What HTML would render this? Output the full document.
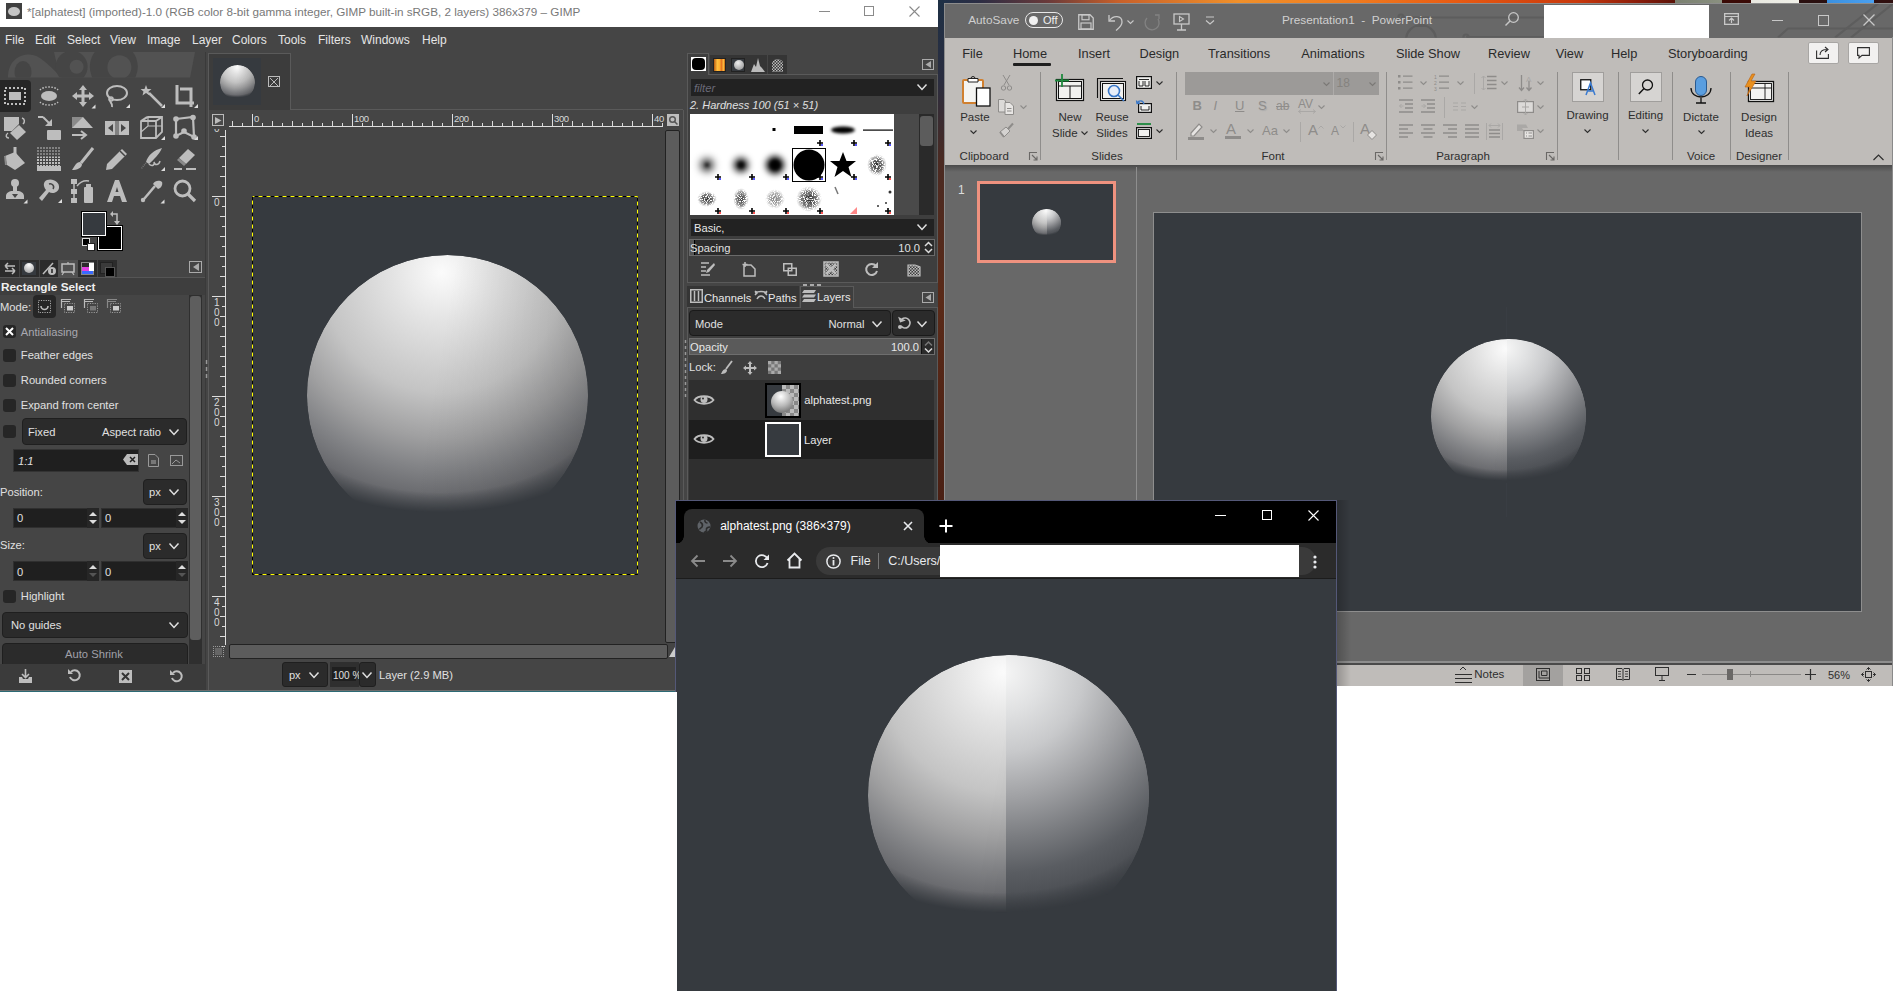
<!DOCTYPE html><html><head><meta charset="utf-8"><style>
*{box-sizing:border-box;margin:0;padding:0}
html,body{width:1893px;height:991px;overflow:hidden;background:#fff;font-family:"Liberation Sans",sans-serif;position:relative}
.a{position:absolute}
.t{position:absolute;white-space:nowrap;line-height:1}
svg{position:absolute;overflow:visible}
</style></head><body><div class="a" style="left:938px;top:0;width:955px;height:4px;background:linear-gradient(90deg,#1e3148 0px,#2b2d44 40px,#6a3a3a 110px,#c8602a 180px,#f0902a 300px,#f07a1e 420px,#e85a12 520px,#c8380c 640px,#8a1c0a 700px,#5a1208 737px,#7a8070 737px,#8a9080 784px,#3a0a06 784px,#3a0a06 813px,#e8e8e0 813px,#f0f0e8 861px,#2a1010 861px,#2a1010 889px,#3a90e0 889px,#4aa0f0 936px,#301010 936px)"></div>
<div class="a" style="left:938px;top:0;width:6px;height:686px;background:linear-gradient(180deg,#1e3045 0,#2a2d40 80px,#4a2a22 160px,#5a2a18 300px,#4a2014 500px,#3a1810 686px)"></div>
<div class="a" style="left:0px;top:0px;width:938px;height:690px;background:#454545;"></div>
<div class="a" style="left:0px;top:690px;width:938px;height:1px;background:#6c6c6c;"></div>
<div class="a" style="left:0px;top:691px;width:938px;height:1px;background:#2c6a74;"></div>
<div class="a" style="left:0px;top:0px;width:938px;height:27px;background:#fff;"></div>
<div class="a" style="left:6px;top:3px;width:16px;height:16px;background:#404040"><div class="a" style="left:2px;top:4px;width:12px;height:9px;border-radius:50%;background:#c4c4c4"></div></div>
<div class="t" style="left:27px;top:5.90px;font-size:11.7px;color:#787878;">*[alphatest] (imported)-1.0 (RGB color 8-bit gamma integer, GIMP built-in sRGB, 2 layers) 386x379 – GIMP</div>
<div class="a" style="left:819px;top:11px;width:11px;height:1px;background:#8a8a8a;"></div>
<div class="a" style="left:864px;top:6px;width:10px;height:10px;background:transparent;border:1px solid #8a8a8a"></div>
<svg style="left:909px;top:6px;" width="11" height="11" viewBox="0 0 11 11"><path d="M0.5 0.5L10.5 10.5M10.5 0.5L0.5 10.5" stroke="#8a8a8a" stroke-width="1.1"/></svg>
<div class="t" style="left:5px;top:34.14px;font-size:12px;color:#e6e6e6;">File</div>
<div class="t" style="left:35px;top:34.14px;font-size:12px;color:#e6e6e6;">Edit</div>
<div class="t" style="left:67px;top:34.14px;font-size:12px;color:#e6e6e6;">Select</div>
<div class="t" style="left:110px;top:34.14px;font-size:12px;color:#e6e6e6;">View</div>
<div class="t" style="left:147px;top:34.14px;font-size:12px;color:#e6e6e6;">Image</div>
<div class="t" style="left:192px;top:34.14px;font-size:12px;color:#e6e6e6;">Layer</div>
<div class="t" style="left:232px;top:34.14px;font-size:12px;color:#e6e6e6;">Colors</div>
<div class="t" style="left:278px;top:34.14px;font-size:12px;color:#e6e6e6;">Tools</div>
<div class="t" style="left:318px;top:34.14px;font-size:12px;color:#e6e6e6;">Filters</div>
<div class="t" style="left:361px;top:34.14px;font-size:12px;color:#e6e6e6;">Windows</div>
<div class="t" style="left:422px;top:34.14px;font-size:12px;color:#e6e6e6;">Help</div>
<svg style="left:0px;top:52px;" width="206" height="26" viewBox="0 0 206 26"><defs><clipPath id="wm"><rect x="0" y="0" width="206" height="25.5"/></clipPath></defs><g clip-path="url(#wm)"><path d="M8 26 C8 9 19 2.5 29 2.5 C39 2.5 47 11 62 26Z" fill="#525252"/><ellipse cx="23" cy="20" rx="8.5" ry="11" fill="#454545"/><path d="M54 0H195L190 26H60Z" fill="#525252"/><circle cx="71.6" cy="14.7" r="16" fill="#454545"/><circle cx="113.8" cy="14.7" r="24" fill="#454545"/><circle cx="76.6" cy="14.7" r="7" fill="#525252"/><circle cx="119.4" cy="15.2" r="12" fill="#525252"/></g></svg>
<div class="a" style="left:0px;top:80px;width:31px;height:32px;background:#262626;border-radius:0 4px 4px 0"></div>
<svg style="left:3px;top:84px;" width="24" height="24" viewBox="0 0 24 24"><rect x="2" y="4" width="20" height="16" fill="none" stroke="#bdbdbd" stroke-width="2" stroke-dasharray="2 2"/><rect x="6" y="8" width="12" height="8" fill="#bdbdbd"/></svg>
<svg style="left:37px;top:84px;" width="24" height="24" viewBox="0 0 24 24"><path d="M3 6C6 2 18 2 21 6M3 18C6 22 18 22 21 18" fill="none" stroke="#bdbdbd" stroke-width="1.5" stroke-dasharray="1.5 1.5"/><ellipse cx="12" cy="12" rx="8" ry="5" fill="#bdbdbd"/></svg>
<svg style="left:71px;top:84px;" width="24" height="24" viewBox="0 0 24 24"><path d="M12 1L16 6H13.5V10.5H18V8L23 12L18 16V13.5H13.5V18H16L12 23L8 18H10.5V13.5H6V16L1 12L6 8V10.5H10.5V6H8Z" fill="#bdbdbd"/><path d="M24.5 20.5V24.5H20.5Z" fill="#ddd"/></svg>
<svg style="left:105px;top:84px;" width="24" height="24" viewBox="0 0 24 24"><ellipse cx="12" cy="9" rx="10" ry="7" fill="none" stroke="#bdbdbd" stroke-width="2"/><path d="M5 14 C3 18 8 18 7 23" fill="none" stroke="#bdbdbd" stroke-width="2"/><circle cx="6" cy="15" r="2" fill="none" stroke="#bdbdbd" stroke-width="1.5"/></svg>
<svg style="left:140px;top:84px;" width="24" height="24" viewBox="0 0 24 24"><path d="M9 9L22 22" stroke="#bdbdbd" stroke-width="2.5"/><path d="M6 1L7.5 5L11.5 5L8.5 7.5L9.5 11.5L6 9L2.5 11.5L3.5 7.5L0.5 5L4.5 5Z" fill="#bdbdbd"/></svg>
<svg style="left:173px;top:84px;" width="24" height="24" viewBox="0 0 24 24"><path d="M4 1V19H21M7 5H18V23" fill="none" stroke="#bdbdbd" stroke-width="3"/></svg>
<svg style="left:3px;top:116px;" width="24" height="24" viewBox="0 0 24 24"><path d="M1 1H16V8L9 15H1Z" fill="#bdbdbd"/><path d="M16 9L23 16L14 24L7 17Z" fill="#bdbdbd"/><path d="M19 2 C22 3 22 6 20 8" fill="none" stroke="#bdbdbd" stroke-width="1.5"/><path d="M5 17 C2 19 3 22 6 22" fill="none" stroke="#bdbdbd" stroke-width="1.5"/></svg>
<svg style="left:37px;top:116px;" width="24" height="24" viewBox="0 0 24 24"><path d="M1 1H6M6 1L14 9" stroke="#bdbdbd" stroke-width="2"/><path d="M15 3V10H8Z" fill="#bdbdbd"/><rect x="10" y="14" width="14" height="10" rx="1" fill="#bdbdbd"/></svg>
<svg style="left:71px;top:116px;" width="24" height="24" viewBox="0 0 24 24"><path d="M1 1H12L22 12H1Z" fill="#bdbdbd"/><path d="M1 1H12L1 12Z" fill="#8a8a8a"/><path d="M1 19H14M10 15L15 19L10 23" fill="none" stroke="#bdbdbd" stroke-width="2"/></svg>
<svg style="left:105px;top:116px;" width="24" height="24" viewBox="0 0 24 24"><rect x="0" y="5" width="24" height="14" fill="#bdbdbd"/><path d="M3 12L8 8V16ZM21 12L16 8V16Z" fill="#454545"/><path d="M11 5V19M13 5V19" stroke="#454545" stroke-width="1"/></svg>
<svg style="left:140px;top:116px;" width="24" height="24" viewBox="0 0 24 24"><path d="M1 5L8 1H22V16L16 22H1Z M1 5H16V22 M16 5L22 1 M1 5L7 1" fill="none" stroke="#bdbdbd" stroke-width="1.8"/><path d="M8 1V10L1 16 M8 10H22" fill="none" stroke="#bdbdbd" stroke-width="1.2"/></svg>
<svg style="left:173px;top:116px;" width="24" height="24" viewBox="0 0 24 24"><path d="M3 3L20 1L21 21L11 16L3 20Z" fill="none" stroke="#bdbdbd" stroke-width="2.2"/><circle cx="3" cy="3" r="2.8" fill="#bdbdbd"/><circle cx="20" cy="1.5" r="2.8" fill="#bdbdbd"/><circle cx="21" cy="21" r="2.8" fill="#bdbdbd"/><circle cx="3" cy="20" r="2.8" fill="#bdbdbd"/><circle cx="11" cy="15" r="2.8" fill="#bdbdbd"/></svg>
<svg style="left:3px;top:147px;" width="24" height="24" viewBox="0 0 24 24"><path d="M2 9L12 5L22 16L12 23L4 18Z" fill="#bdbdbd"/><path d="M12 0V13" stroke="#bdbdbd" stroke-width="3"/><path d="M2 9L3 18" stroke="#8a8a8a" stroke-width="2"/></svg>
<svg style="left:37px;top:147px;" width="24" height="24" viewBox="0 0 24 24"><defs><pattern id="ht" width="3" height="3" patternUnits="userSpaceOnUse"><rect width="2" height="2" fill="#bdbdbd"/></pattern></defs><rect x="0" y="0" width="24" height="24" fill="url(#ht)" opacity="0.5"/><rect x="0" y="10" width="24" height="14" fill="url(#ht)"/><rect x="0" y="19" width="24" height="5" fill="#bdbdbd"/></svg>
<svg style="left:71px;top:147px;" width="24" height="24" viewBox="0 0 24 24"><path d="M22 1L10 16" stroke="#bdbdbd" stroke-width="3"/><path d="M9 15C5 15 4 19 1 23C6 23 11 21 11 17Z" fill="#bdbdbd"/></svg>
<svg style="left:105px;top:147px;" width="24" height="24" viewBox="0 0 24 24"><path d="M17 2L22 7L7 22L1 23L2 17Z" fill="#bdbdbd"/><path d="M15 4L20 9" stroke="#454545" stroke-width="1.5"/></svg>
<svg style="left:140px;top:147px;" width="24" height="24" viewBox="0 0 24 24"><path d="M22 1C14 3 8 8 6 15L9 17C14 12 19 8 22 1Z" fill="#bdbdbd"/><path d="M9 17 C12 20 15 18 14 15 C15 19 19 18 20 14" fill="none" stroke="#bdbdbd" stroke-width="1.5"/><path d="M6 16L1 22" stroke="#777" stroke-width="1.5" stroke-dasharray="1 1"/></svg>
<svg style="left:173px;top:147px;" width="24" height="24" viewBox="0 0 24 24"><path d="M6 11L15 2L22 8L13 17Z" fill="#bdbdbd"/><path d="M6 11L13 17L11 19L4 13Z" fill="#8a8a8a"/><path d="M1 22H9M13 22H23" stroke="#bdbdbd" stroke-width="2"/></svg>
<svg style="left:3px;top:179px;" width="24" height="24" viewBox="0 0 24 24"><circle cx="12" cy="4" r="4" fill="#bdbdbd"/><path d="M10 6H14V12C18 12 21 14 21 17V20H3V17C3 14 6 12 10 12Z" fill="#bdbdbd"/><path d="M9 15H15L12 19Z" fill="#454545"/><path d="M24.5 20.5V24.5H20.5Z" fill="#ddd"/></svg>
<svg style="left:37px;top:179px;" width="24" height="24" viewBox="0 0 24 24"><path d="M10 1C16 -1 23 3 22 9C21 14 15 15 12 13L5 22L2 19L9 11C6 7 6 3 10 1Z" fill="#bdbdbd"/><path d="M12 5 C15 4 18 7 16 10" fill="none" stroke="#454545" stroke-width="1.5"/></svg>
<svg style="left:71px;top:179px;" width="24" height="24" viewBox="0 0 24 24"><path d="M3 3V21" stroke="#bdbdbd" stroke-width="1.5"/><rect x="0" y="0" width="6" height="5" fill="#bdbdbd"/><rect x="0" y="10" width="6" height="5" fill="#bdbdbd"/><rect x="0" y="19" width="6" height="5" fill="#bdbdbd"/><path d="M6 7C9 3 13 1 18 2" fill="none" stroke="#bdbdbd" stroke-width="1.5"/><rect x="13" y="8" width="9" height="16" rx="1" fill="#bdbdbd"/><rect x="15" y="5" width="5" height="3" fill="#bdbdbd"/></svg>
<svg style="left:105px;top:179px;" width="24" height="24" viewBox="0 0 24 24"><path d="M2 23L10 1H14L22 23H17L15 17H9L7 23ZM10.5 13H13.5L12 8Z" fill="#bdbdbd"/></svg>
<svg style="left:140px;top:179px;" width="24" height="24" viewBox="0 0 24 24"><path d="M4 20L15 7" stroke="#bdbdbd" stroke-width="2.5"/><circle cx="3" cy="21" r="2.2" fill="#bdbdbd"/><path d="M13 5C15 1 20 1 22 3C23 6 21 9 18 10Z" fill="#bdbdbd"/><path d="M24.5 20.5V24.5H20.5Z" fill="#ddd"/></svg>
<svg style="left:173px;top:179px;" width="24" height="24" viewBox="0 0 24 24"><circle cx="9.5" cy="9.5" r="7.5" fill="none" stroke="#bdbdbd" stroke-width="2.8"/><path d="M15 15L22 22" stroke="#bdbdbd" stroke-width="3.2"/></svg>
<svg style="left:126px;top:104px;" width="4" height="4" viewBox="0 0 4 4"><path d="M4 0V4H0Z" fill="#ddd"/></svg>
<svg style="left:161px;top:104px;" width="4" height="4" viewBox="0 0 4 4"><path d="M4 0V4H0Z" fill="#ddd"/></svg>
<svg style="left:194px;top:104px;" width="4" height="4" viewBox="0 0 4 4"><path d="M4 0V4H0Z" fill="#ddd"/></svg>
<svg style="left:161px;top:136px;" width="4" height="4" viewBox="0 0 4 4"><path d="M4 0V4H0Z" fill="#ddd"/></svg>
<svg style="left:194px;top:136px;" width="4" height="4" viewBox="0 0 4 4"><path d="M4 0V4H0Z" fill="#ddd"/></svg>
<svg style="left:161px;top:167px;" width="4" height="4" viewBox="0 0 4 4"><path d="M4 0V4H0Z" fill="#ddd"/></svg>
<svg style="left:58px;top:199px;" width="4" height="4" viewBox="0 0 4 4"><path d="M4 0V4H0Z" fill="#ddd"/></svg>
<div class="a" style="left:98px;top:226px;width:24px;height:24px;background:#000;border:1px solid #fff;outline:1px solid #000"></div>
<div class="a" style="left:82px;top:212px;width:24px;height:24px;background:#363a3f;border:1px solid #fff;outline:1px solid #000"></div>
<svg style="left:110px;top:211px;" width="12" height="16" viewBox="0 0 12 16"><path d="M1 3H7V11" fill="none" stroke="#bdbdbd" stroke-width="1.5"/><path d="M3 0L0 3L3 6ZM4 10L7 14L10 10Z" fill="#bdbdbd"/></svg>
<div class="a" style="left:82px;top:238px;width:8px;height:8px;background:#000;border:1px solid #ddd"></div>
<div class="a" style="left:87px;top:243px;width:8px;height:8px;background:#fff;border:1px solid #222"></div>
<div class="a" style="left:0px;top:260px;width:19px;height:17px;background:#2c2c2c;"></div>
<div class="a" style="left:20px;top:260px;width:19px;height:17px;background:#2c2c2c;"></div>
<div class="a" style="left:40px;top:260px;width:19px;height:17px;background:#2c2c2c;"></div>
<div class="a" style="left:58px;top:260px;width:20px;height:17px;background:#505050;"></div>
<div class="a" style="left:78px;top:260px;width:19px;height:17px;background:#2c2c2c;"></div>
<div class="a" style="left:98px;top:260px;width:19px;height:17px;background:#2c2c2c;"></div>
<svg style="left:2px;top:262px;" width="16" height="13" viewBox="0 0 16 13"><path d="M3 4H13M3 4L6 1M3 4L6 7 M13 9H3M13 9L10 6M13 9L10 12" fill="none" stroke="#bdbdbd" stroke-width="1.5"/></svg>
<div class="a" style="left:22px;top:262px;width:14px;height:13px;background:#363a3f"><div class="a" style="left:2px;top:1px;width:10px;height:10px;border-radius:50%;background:radial-gradient(circle at 50% 20%,#fff,#999)"></div></div>
<svg style="left:42px;top:262px;" width="14" height="13" viewBox="0 0 14 13"><path d="M1 12L11 1" stroke="#bdbdbd" stroke-width="1.5"/><circle cx="10" cy="9" r="4" fill="#bdbdbd"/><path d="M10 7V11" stroke="#222" stroke-width="1.5"/></svg>
<svg style="left:61px;top:262px;" width="14" height="13" viewBox="0 0 14 13"><rect x="1" y="2" width="12" height="8" fill="none" stroke="#bdbdbd" stroke-width="1.5"/><path d="M3 10L1 13M11 10L13 13M7 0V2" stroke="#bdbdbd" stroke-width="1.2"/></svg>
<div class="a" style="left:81px;top:262px;width:13px;height:13px;background:linear-gradient(180deg,#2a2a2a 0,#2a2a2a 40%,#e040e0 40%,#e040e0 70%,#3a6aff 70%);border:1px solid #888"><div class="a" style="left:7px;top:0;width:5px;height:8px;background:#fff"></div></div>
<div class="a" style="left:100px;top:262px;width:13px;height:12px;background:#3a3a3a;border:1px solid #222"></div>
<div class="a" style="left:105px;top:267px;width:10px;height:10px;background:#000;border:1px solid #555"></div>
<div class="a" style="left:189px;top:261px;width:13px;height:12px;background:#454545;border:1px solid #aaa"></div>
<svg style="left:192px;top:263px;" width="8" height="8" viewBox="0 0 8 8"><path d="M7 0V8L1 4Z" fill="#aaa"/></svg>
<div class="a" style="left:0px;top:277px;width:206px;height:1px;background:#555;"></div>
<div class="a" style="left:0px;top:278px;width:206px;height:17px;background:#3e3e3e;"></div>
<div class="t" style="left:1px;top:282.31px;font-size:11.8px;color:#f0f0f0;font-weight:bold;">Rectangle Select</div>
<div class="a" style="left:0px;top:295px;width:189px;height:369px;background:#454545;"></div>
<div class="a" style="left:189px;top:295px;width:13px;height:369px;background:#2f2f2f;"></div>
<div class="a" style="left:190px;top:296px;width:11px;height:344px;background:#5e5e5e;border-radius:3px"></div>
<div class="t" style="left:0px;top:301.52px;font-size:11.2px;color:#e0e0e0;">Mode:</div>
<div class="a" style="left:33px;top:295px;width:23px;height:23px;background:#262626;border-radius:4px"></div>
<svg style="left:38px;top:300px;" width="13" height="13" viewBox="0 0 13 13"><rect x="0.5" y="0.5" width="12" height="12" fill="none" stroke="#aaa" stroke-width="1" stroke-dasharray="1.2 1.2"/><path d="M3 6A3.5 3.5 0 0 0 10 6" fill="none" stroke="#bbb" stroke-width="1.6"/></svg>
<svg style="left:61px;top:299px;" width="14" height="14" viewBox="0 0 14 14"><path d="M0.5 9V0.5H10" fill="none" stroke="#bbb" stroke-width="1.2"/><path d="M0.5 2.5H9" stroke="#bbb" stroke-width="1"/><rect x="3.5" y="4.5" width="10" height="9" fill="none" stroke="#999" stroke-width="1" stroke-dasharray="1.2 1.2"/><rect x="6" y="7" width="6" height="4.5" fill="#ccc"/></svg>
<svg style="left:84px;top:299px;" width="14" height="14" viewBox="0 0 14 14"><path d="M0.5 9V0.5H10" fill="none" stroke="#bbb" stroke-width="1.2"/><path d="M0.5 2.5H9" stroke="#bbb" stroke-width="1"/><rect x="3.5" y="4.5" width="10" height="9" fill="none" stroke="#999" stroke-width="1" stroke-dasharray="1.2 1.2"/><rect x="6" y="7" width="6" height="4.5" fill="#777"/></svg>
<svg style="left:107px;top:299px;" width="14" height="14" viewBox="0 0 14 14"><path d="M0.5 9V0.5H10" fill="none" stroke="#888" stroke-width="1.2"/><path d="M0.5 2.5H9" stroke="#888" stroke-width="1"/><rect x="3.5" y="4.5" width="10" height="9" fill="none" stroke="#999" stroke-width="1" stroke-dasharray="1.2 1.2"/><rect x="6" y="7" width="6" height="4.5" fill="#ccc"/></svg>
<div class="a" style="left:3px;top:325px;width:13px;height:13px;background:#262626;border-radius:3px"></div>
<svg style="left:5px;top:327px;" width="9" height="9" viewBox="0 0 9 9"><path d="M1 1L8 8M8 1L1 8" stroke="#fff" stroke-width="2"/></svg>
<div class="t" style="left:20.8px;top:327.02px;font-size:11.2px;color:#a8a8b0;">Antialiasing</div>
<div class="a" style="left:3px;top:348.5px;width:13px;height:13px;background:#262626;border-radius:3px"></div>
<div class="t" style="left:20.8px;top:350.02px;font-size:11.2px;color:#e0e0e0;">Feather edges</div>
<div class="a" style="left:3px;top:373.5px;width:13px;height:13px;background:#262626;border-radius:3px"></div>
<div class="t" style="left:20.8px;top:375.02px;font-size:11.2px;color:#e0e0e0;">Rounded corners</div>
<div class="a" style="left:3px;top:398.5px;width:13px;height:13px;background:#262626;border-radius:3px"></div>
<div class="t" style="left:20.8px;top:400.02px;font-size:11.2px;color:#e0e0e0;">Expand from center</div>
<div class="a" style="left:3px;top:425px;width:13px;height:13px;background:#262626;border-radius:3px"></div>
<div class="a" style="left:22px;top:418px;width:165px;height:27px;background:#2b2b2b;border:1px solid #1f1f1f;border-radius:4px"></div>
<div class="t" style="left:28px;top:426.52px;font-size:11.2px;color:#e0e0e0;">Fixed</div>
<div class="t" style="left:-439px;width:600px;text-align:right;top:426.52px;font-size:11.2px;color:#e0e0e0;">Aspect ratio</div>
<svg style="left:169px;top:429px;" width="10" height="6" viewBox="0 0 10 6"><path d="M0.5 0.5L5.0 5.5L9.5 0.5" fill="none" stroke="#e0e0e0" stroke-width="1.5"/></svg>
<div class="a" style="left:13px;top:448.5px;width:126px;height:23px;background:#1f1f1f;border:1px solid #333"></div>
<div class="t" style="left:18px;top:455.52px;font-size:11.2px;color:#e0e0e0;font-style:italic;">1:1</div>
<svg style="left:123px;top:454px;" width="15" height="11" viewBox="0 0 15 11"><path d="M4 0H15V11H4L0 5.5Z" fill="#bbb"/><path d="M7 3L12 8M12 3L7 8" stroke="#222" stroke-width="1.5"/></svg>
<svg style="left:148px;top:454px;" width="11" height="13" viewBox="0 0 11 13"><path d="M0.5 0.5H7L10.5 4V12.5H0.5Z" fill="none" stroke="#999"/><rect x="3" y="6" width="5" height="4" fill="#777"/></svg>
<svg style="left:170px;top:455px;" width="13" height="11" viewBox="0 0 13 11"><rect x="0.5" y="0.5" width="12" height="10" fill="none" stroke="#999"/><path d="M2 9L6 5L10 8" stroke="#999" fill="none"/></svg>
<div class="t" style="left:0px;top:486.52px;font-size:11.2px;color:#e0e0e0;">Position:</div>
<div class="a" style="left:143px;top:478.5px;width:44px;height:26px;background:#2b2b2b;border:1px solid #1f1f1f;border-radius:4px"></div>
<div class="t" style="left:149px;top:486.52px;font-size:11.2px;color:#e0e0e0;">px</div>
<svg style="left:169px;top:489px;" width="10" height="6" viewBox="0 0 10 6"><path d="M0.5 0.5L5.0 5.5L9.5 0.5" fill="none" stroke="#e0e0e0" stroke-width="1.5"/></svg>
<div class="a" style="left:13px;top:507.5px;width:86px;height:20px;background:#1f1f1f;border:1px solid #2f2f2f"></div>
<div class="t" style="left:17px;top:513.02px;font-size:11.2px;color:#e0e0e0;">0</div>
<div class="a" style="left:87px;top:507.5px;width:12px;height:20px;background:#262626;"></div>
<svg style="left:89px;top:509.5px;" width="8" height="16" viewBox="0 0 8 16"><path d="M0 6L4 2L8 6Z" fill="#ddd"/><path d="M0 10L4 14L8 10Z" fill="#ddd"/></svg>
<div class="a" style="left:101px;top:507.5px;width:87px;height:20px;background:#1f1f1f;border:1px solid #2f2f2f"></div>
<div class="t" style="left:105px;top:513.02px;font-size:11.2px;color:#e0e0e0;">0</div>
<div class="a" style="left:176px;top:507.5px;width:12px;height:20px;background:#262626;"></div>
<svg style="left:178px;top:509.5px;" width="8" height="16" viewBox="0 0 8 16"><path d="M0 6L4 2L8 6Z" fill="#ddd"/><path d="M0 10L4 14L8 10Z" fill="#ddd"/></svg>
<div class="t" style="left:0px;top:540.22px;font-size:11.2px;color:#e0e0e0;">Size:</div>
<div class="a" style="left:143px;top:532.5px;width:44px;height:26px;background:#2b2b2b;border:1px solid #1f1f1f;border-radius:4px"></div>
<div class="t" style="left:149px;top:540.52px;font-size:11.2px;color:#e0e0e0;">px</div>
<svg style="left:169px;top:543px;" width="10" height="6" viewBox="0 0 10 6"><path d="M0.5 0.5L5.0 5.5L9.5 0.5" fill="none" stroke="#e0e0e0" stroke-width="1.5"/></svg>
<div class="a" style="left:13px;top:561px;width:86px;height:20px;background:#1f1f1f;border:1px solid #2f2f2f"></div>
<div class="t" style="left:17px;top:566.52px;font-size:11.2px;color:#e0e0e0;">0</div>
<div class="a" style="left:87px;top:561px;width:12px;height:20px;background:#262626;"></div>
<svg style="left:89px;top:563px;" width="8" height="16" viewBox="0 0 8 16"><path d="M0 6L4 2L8 6Z" fill="#ddd"/><path d="M0 10L4 14L8 10Z" fill="#555"/></svg>
<div class="a" style="left:101px;top:561px;width:87px;height:20px;background:#1f1f1f;border:1px solid #2f2f2f"></div>
<div class="t" style="left:105px;top:566.52px;font-size:11.2px;color:#e0e0e0;">0</div>
<div class="a" style="left:176px;top:561px;width:12px;height:20px;background:#262626;"></div>
<svg style="left:178px;top:563px;" width="8" height="16" viewBox="0 0 8 16"><path d="M0 6L4 2L8 6Z" fill="#ddd"/><path d="M0 10L4 14L8 10Z" fill="#555"/></svg>
<div class="a" style="left:3px;top:589.5px;width:13px;height:13px;background:#262626;border-radius:3px"></div>
<div class="t" style="left:20.8px;top:591.02px;font-size:11.2px;color:#e0e0e0;">Highlight</div>
<div class="a" style="left:1.5px;top:611.5px;width:186px;height:26px;background:#2b2b2b;border:1px solid #1f1f1f;border-radius:4px"></div>
<div class="t" style="left:11px;top:620.02px;font-size:11.2px;color:#e0e0e0;">No guides</div>
<svg style="left:169px;top:622px;" width="10" height="6" viewBox="0 0 10 6"><path d="M0.5 0.5L5.0 5.5L9.5 0.5" fill="none" stroke="#e0e0e0" stroke-width="1.5"/></svg>
<div class="a" style="left:1.5px;top:642.5px;width:186px;height:25px;background:#2b2b2b;border:1px solid #1f1f1f;border-radius:4px"></div>
<div class="t" style="left:-206px;width:600px;text-align:center;top:649.02px;font-size:11.2px;color:#a0a0a8;">Auto Shrink</div>
<div class="a" style="left:0px;top:664px;width:206px;height:26px;background:#3b3b3b;"></div>
<svg style="left:19px;top:669px;" width="13" height="14" viewBox="0 0 13 14"><path d="M6.5 0V8M3 5L6.5 8.5L10 5" fill="none" stroke="#bdbdbd" stroke-width="1.6"/><path d="M0 8H3L4 10H9L10 8H13V14H0Z" fill="#bdbdbd"/></svg>
<svg style="left:68px;top:669px;" width="13" height="13" viewBox="0 0 13 13"><path d="M3 3A5 5 0 1 1 2 8" fill="none" stroke="#bdbdbd" stroke-width="2"/><path d="M0 0V5H5Z" fill="#bdbdbd"/></svg>
<svg style="left:119px;top:670px;" width="13" height="13" viewBox="0 0 13 13"><rect x="0" y="0" width="13" height="13" fill="#bdbdbd"/><path d="M3 3L10 10M10 3L3 10" stroke="#333" stroke-width="2"/></svg>
<svg style="left:170px;top:670px;" width="13" height="13" viewBox="0 0 13 13"><path d="M10 3A5 5 0 1 0 11 8" fill="none" stroke="#bdbdbd" stroke-width="2" transform="translate(13,0) scale(-1,1)"/><path d="M13 0V5H8Z" fill="#bdbdbd" transform="translate(13,0) scale(-1,1)"/></svg>
<div class="a" style="left:205px;top:52px;width:1px;height:638px;background:#3a3a3a;"></div>
<div class="a" style="left:208px;top:110px;width:1px;height:580px;background:#5a5a5a;"></div>
<svg style="left:205px;top:360px;" width="3" height="22" viewBox="0 0 3 22"><path d="M1.5 0V4M1.5 7V11M1.5 14V18" stroke="#999" stroke-width="1.5"/></svg>
<div class="a" style="left:208px;top:53px;width:83px;height:57px;background:#3c3c3c;border:1px solid #5a5a5a;border-bottom:none"></div>
<div class="a" style="left:291px;top:109px;width:392px;height:1px;background:#5a5a5a;"></div>
<div class="a" style="left:683px;top:110px;width:1px;height:580px;background:#5a5a5a;"></div>
<div class="a" style="left:213px;top:58px;width:48px;height:47px;background:#363a3f;"></div>
<div class="a" style="left:219.60px;top:64.60px;width:35.60px;height:35.60px;border-radius:50%;overflow:hidden;-webkit-mask-image:linear-gradient(#000 19.18px, rgba(0,0,0,0) 19.18px), radial-gradient(ellipse 22.80px 12.67px at 16.85px 19.18px, #000 86%, rgba(0,0,0,0.3) 100%, rgba(0,0,0,0) 106%);mask-image:linear-gradient(#000 19.18px, rgba(0,0,0,0) 19.18px), radial-gradient(ellipse 22.80px 12.67px at 16.85px 19.18px, #000 86%, rgba(0,0,0,0.3) 100%, rgba(0,0,0,0) 106%)"><div class="a" style="left:0;top:0;width:35.60px;height:35.60px;background:linear-gradient(100deg, rgba(0,0,0,0) 45%, rgba(0,0,0,0.13) 100%), radial-gradient(circle at 17.10px 2.20px, #fbfbfb 0px, #e3e3e3 6.33px, #c4c4c4 15.20px, #a0a0a1 20.90px, #838487 24.70px, #68696d 28.51px, #54565a 32.31px, #44474b 36.74px)"></div></div>
<div class="a" style="left:268px;top:75.5px;width:11.5px;height:11.5px;background:transparent;border:1px solid #bbb"></div>
<svg style="left:270px;top:77.5px;" width="8" height="8" viewBox="0 0 8 8"><path d="M0 0L8 8M8 0L0 8" stroke="#bbb" stroke-width="1"/></svg>
<div class="a" style="left:212px;top:114px;width:12px;height:12px;background:#bbb;"></div>
<div class="a" style="left:213px;top:115px;width:10px;height:10px;background:#4a4a4a;"></div>
<svg style="left:215px;top:117px;" width="7" height="7" viewBox="0 0 7 7"><path d="M0 0V7L6.5 3.5Z" fill="#bbb"/></svg>
<svg style="left:229px;top:126px;" width="434" height="1" viewBox="0 0 434 1"><path d="M0 0.5H434" stroke="#ddd" stroke-width="1"/><path d="M3.5 0V-5" stroke="#ddd" stroke-width="1"/><path d="M13.5 0V-3" stroke="#ddd" stroke-width="1"/><path d="M23.5 0V-12" stroke="#ddd" stroke-width="1"/><path d="M33.5 0V-3" stroke="#ddd" stroke-width="1"/><path d="M43.5 0V-5" stroke="#ddd" stroke-width="1"/><path d="M53.5 0V-3" stroke="#ddd" stroke-width="1"/><path d="M63.5 0V-5" stroke="#ddd" stroke-width="1"/><path d="M73.5 0V-3" stroke="#ddd" stroke-width="1"/><path d="M83.5 0V-5" stroke="#ddd" stroke-width="1"/><path d="M93.5 0V-3" stroke="#ddd" stroke-width="1"/><path d="M103.5 0V-5" stroke="#ddd" stroke-width="1"/><path d="M113.5 0V-3" stroke="#ddd" stroke-width="1"/><path d="M123.5 0V-12" stroke="#ddd" stroke-width="1"/><path d="M133.5 0V-3" stroke="#ddd" stroke-width="1"/><path d="M143.5 0V-5" stroke="#ddd" stroke-width="1"/><path d="M153.5 0V-3" stroke="#ddd" stroke-width="1"/><path d="M163.5 0V-5" stroke="#ddd" stroke-width="1"/><path d="M173.5 0V-3" stroke="#ddd" stroke-width="1"/><path d="M183.5 0V-5" stroke="#ddd" stroke-width="1"/><path d="M193.5 0V-3" stroke="#ddd" stroke-width="1"/><path d="M203.5 0V-5" stroke="#ddd" stroke-width="1"/><path d="M213.5 0V-3" stroke="#ddd" stroke-width="1"/><path d="M223.5 0V-12" stroke="#ddd" stroke-width="1"/><path d="M233.5 0V-3" stroke="#ddd" stroke-width="1"/><path d="M243.5 0V-5" stroke="#ddd" stroke-width="1"/><path d="M253.5 0V-3" stroke="#ddd" stroke-width="1"/><path d="M263.5 0V-5" stroke="#ddd" stroke-width="1"/><path d="M273.5 0V-3" stroke="#ddd" stroke-width="1"/><path d="M283.5 0V-5" stroke="#ddd" stroke-width="1"/><path d="M293.5 0V-3" stroke="#ddd" stroke-width="1"/><path d="M303.5 0V-5" stroke="#ddd" stroke-width="1"/><path d="M313.5 0V-3" stroke="#ddd" stroke-width="1"/><path d="M323.5 0V-12" stroke="#ddd" stroke-width="1"/><path d="M333.5 0V-3" stroke="#ddd" stroke-width="1"/><path d="M343.5 0V-5" stroke="#ddd" stroke-width="1"/><path d="M353.5 0V-3" stroke="#ddd" stroke-width="1"/><path d="M363.5 0V-5" stroke="#ddd" stroke-width="1"/><path d="M373.5 0V-3" stroke="#ddd" stroke-width="1"/><path d="M383.5 0V-5" stroke="#ddd" stroke-width="1"/><path d="M393.5 0V-3" stroke="#ddd" stroke-width="1"/><path d="M403.5 0V-5" stroke="#ddd" stroke-width="1"/><path d="M413.5 0V-3" stroke="#ddd" stroke-width="1"/><path d="M423.5 0V-12" stroke="#ddd" stroke-width="1"/><path d="M433.5 0V-3" stroke="#ddd" stroke-width="1"/></svg>
<div class="t" style="left:254px;top:113.96px;font-size:9.5px;color:#d8d8d8;letter-spacing:-0.4px">0</div>
<div class="t" style="left:354px;top:113.96px;font-size:9.5px;color:#d8d8d8;letter-spacing:-0.4px">100</div>
<div class="t" style="left:454px;top:113.96px;font-size:9.5px;color:#d8d8d8;letter-spacing:-0.4px">200</div>
<div class="t" style="left:554px;top:113.96px;font-size:9.5px;color:#d8d8d8;letter-spacing:-0.4px">300</div>
<div class="t" style="left:654px;top:113.96px;font-size:9.5px;color:#d8d8d8;letter-spacing:-0.4px">40</div>
<svg style="left:225px;top:130px;" width="1" height="515" viewBox="0 0 1 515"><path d="M0.5 0V515" stroke="#ddd" stroke-width="1"/><path d="M0 6.5H-5" stroke="#ddd" stroke-width="1"/><path d="M0 16.5H-3" stroke="#ddd" stroke-width="1"/><path d="M0 26.5H-5" stroke="#ddd" stroke-width="1"/><path d="M0 36.5H-3" stroke="#ddd" stroke-width="1"/><path d="M0 46.5H-5" stroke="#ddd" stroke-width="1"/><path d="M0 56.5H-3" stroke="#ddd" stroke-width="1"/><path d="M0 66.5H-13" stroke="#ddd" stroke-width="1"/><path d="M0 76.5H-3" stroke="#ddd" stroke-width="1"/><path d="M0 86.5H-5" stroke="#ddd" stroke-width="1"/><path d="M0 96.5H-3" stroke="#ddd" stroke-width="1"/><path d="M0 106.5H-5" stroke="#ddd" stroke-width="1"/><path d="M0 116.5H-3" stroke="#ddd" stroke-width="1"/><path d="M0 126.5H-5" stroke="#ddd" stroke-width="1"/><path d="M0 136.5H-3" stroke="#ddd" stroke-width="1"/><path d="M0 146.5H-5" stroke="#ddd" stroke-width="1"/><path d="M0 156.5H-3" stroke="#ddd" stroke-width="1"/><path d="M0 166.5H-13" stroke="#ddd" stroke-width="1"/><path d="M0 176.5H-3" stroke="#ddd" stroke-width="1"/><path d="M0 186.5H-5" stroke="#ddd" stroke-width="1"/><path d="M0 196.5H-3" stroke="#ddd" stroke-width="1"/><path d="M0 206.5H-5" stroke="#ddd" stroke-width="1"/><path d="M0 216.5H-3" stroke="#ddd" stroke-width="1"/><path d="M0 226.5H-5" stroke="#ddd" stroke-width="1"/><path d="M0 236.5H-3" stroke="#ddd" stroke-width="1"/><path d="M0 246.5H-5" stroke="#ddd" stroke-width="1"/><path d="M0 256.5H-3" stroke="#ddd" stroke-width="1"/><path d="M0 266.5H-13" stroke="#ddd" stroke-width="1"/><path d="M0 276.5H-3" stroke="#ddd" stroke-width="1"/><path d="M0 286.5H-5" stroke="#ddd" stroke-width="1"/><path d="M0 296.5H-3" stroke="#ddd" stroke-width="1"/><path d="M0 306.5H-5" stroke="#ddd" stroke-width="1"/><path d="M0 316.5H-3" stroke="#ddd" stroke-width="1"/><path d="M0 326.5H-5" stroke="#ddd" stroke-width="1"/><path d="M0 336.5H-3" stroke="#ddd" stroke-width="1"/><path d="M0 346.5H-5" stroke="#ddd" stroke-width="1"/><path d="M0 356.5H-3" stroke="#ddd" stroke-width="1"/><path d="M0 366.5H-13" stroke="#ddd" stroke-width="1"/><path d="M0 376.5H-3" stroke="#ddd" stroke-width="1"/><path d="M0 386.5H-5" stroke="#ddd" stroke-width="1"/><path d="M0 396.5H-3" stroke="#ddd" stroke-width="1"/><path d="M0 406.5H-5" stroke="#ddd" stroke-width="1"/><path d="M0 416.5H-3" stroke="#ddd" stroke-width="1"/><path d="M0 426.5H-5" stroke="#ddd" stroke-width="1"/><path d="M0 436.5H-3" stroke="#ddd" stroke-width="1"/><path d="M0 446.5H-5" stroke="#ddd" stroke-width="1"/><path d="M0 456.5H-3" stroke="#ddd" stroke-width="1"/><path d="M0 466.5H-13" stroke="#ddd" stroke-width="1"/><path d="M0 476.5H-3" stroke="#ddd" stroke-width="1"/><path d="M0 486.5H-5" stroke="#ddd" stroke-width="1"/><path d="M0 496.5H-3" stroke="#ddd" stroke-width="1"/><path d="M0 506.5H-5" stroke="#ddd" stroke-width="1"/><path d="M0 516.5H-3" stroke="#ddd" stroke-width="1"/></svg>
<div class="t" style="left:214px;top:197.53px;font-size:10px;color:#d8d8d8;">0</div>
<div class="t" style="left:214px;top:297.54px;font-size:10px;color:#d8d8d8;">1</div>
<div class="t" style="left:214px;top:307.54px;font-size:10px;color:#d8d8d8;">0</div>
<div class="t" style="left:214px;top:317.54px;font-size:10px;color:#d8d8d8;">0</div>
<div class="t" style="left:214px;top:397.54px;font-size:10px;color:#d8d8d8;">2</div>
<div class="t" style="left:214px;top:407.54px;font-size:10px;color:#d8d8d8;">0</div>
<div class="t" style="left:214px;top:417.54px;font-size:10px;color:#d8d8d8;">0</div>
<div class="t" style="left:214px;top:497.54px;font-size:10px;color:#d8d8d8;">3</div>
<div class="t" style="left:214px;top:507.54px;font-size:10px;color:#d8d8d8;">0</div>
<div class="t" style="left:214px;top:517.53px;font-size:10px;color:#d8d8d8;">0</div>
<div class="t" style="left:214px;top:597.53px;font-size:10px;color:#d8d8d8;">4</div>
<div class="t" style="left:214px;top:607.53px;font-size:10px;color:#d8d8d8;">0</div>
<div class="t" style="left:214px;top:617.53px;font-size:10px;color:#d8d8d8;">0</div>
<div class="a" style="left:212px;top:129px;width:12px;height:8px;overflow:hidden"><div class="t" style="left:2px;top:-5.46px;font-size:10px;color:#d8d8d8;">0</div></div>
<div class="a" style="left:253px;top:197px;width:385px;height:378px;background:#363a3f;"></div>
<div class="a" style="left:307.00px;top:254.60px;width:281.00px;height:281.00px;border-radius:50%;overflow:hidden;-webkit-mask-image:linear-gradient(#000 151.40px, rgba(0,0,0,0) 151.40px), radial-gradient(ellipse 180.00px 100.00px at 133.00px 151.40px, #000 86%, rgba(0,0,0,0.3) 100%, rgba(0,0,0,0) 106%);mask-image:linear-gradient(#000 151.40px, rgba(0,0,0,0) 151.40px), radial-gradient(ellipse 180.00px 100.00px at 133.00px 151.40px, #000 86%, rgba(0,0,0,0.3) 100%, rgba(0,0,0,0) 106%)"><div class="a" style="left:0;top:0;width:281.00px;height:281.00px;background:linear-gradient(100deg, rgba(0,0,0,0) 45%, rgba(0,0,0,0.13) 100%), radial-gradient(circle at 135.00px 17.40px, #fbfbfb 0px, #e3e3e3 50.00px, #c4c4c4 120.00px, #a0a0a1 165.00px, #838487 195.00px, #68696d 225.00px, #54565a 255.00px, #44474b 290.00px)"></div></div>
<svg style="left:252px;top:196px;" width="387" height="379" viewBox="0 0 387 379"><rect x="0.5" y="0.5" width="385" height="378" fill="none" stroke="#000" stroke-width="1"/><rect x="0.5" y="0.5" width="385" height="378" fill="none" stroke="#ffff00" stroke-width="1" stroke-dasharray="4 4" stroke-dashoffset="2"/></svg>
<div class="a" style="left:667px;top:114px;width:12px;height:12px;background:#bdbdbd;"></div>
<svg style="left:669px;top:116px;" width="9" height="9" viewBox="0 0 9 9"><circle cx="3.5" cy="3.5" r="2.8" fill="none" stroke="#555" stroke-width="1.5"/><path d="M5.5 5.5L8.5 8.5" stroke="#555" stroke-width="1.5"/></svg>
<div class="a" style="left:665px;top:130px;width:15px;height:513px;background:#5c5c5c;border:1px solid #222;border-radius:2px"></div>
<div class="a" style="left:229px;top:644px;width:439px;height:15px;background:#5c5c5c;border:1px solid #222;border-radius:2px"></div>
<svg style="left:669px;top:647px;" width="7" height="10" viewBox="0 0 7 10"><path d="M6 0V10H0Z" fill="#ccc"/></svg>
<div class="a" style="left:213px;top:646px;width:11px;height:11px;background:transparent;border:1px dotted #999"></div>
<div class="a" style="left:215px;top:648px;width:7px;height:7px;background:#666;"></div>
<div class="a" style="left:282px;top:662px;width:46px;height:25px;background:#2b2b2b;border:1px solid #1f1f1f;border-radius:3px"></div>
<div class="t" style="left:289px;top:669.69px;font-size:11px;color:#e0e0e0;">px</div>
<svg style="left:309px;top:672px;" width="10" height="6" viewBox="0 0 10 6"><path d="M0.5 0.5L5.0 5.5L9.5 0.5" fill="none" stroke="#e0e0e0" stroke-width="1.5"/></svg>
<div class="a" style="left:330px;top:662px;width:29px;height:25px;background:#2f2f2f;"></div>
<div class="a" style="left:332px;top:667px;width:24px;height:14px;background:#1f1f1f;"></div>
<div class="t" style="left:333px;top:670.53px;font-size:10px;color:#e0e0e0;">100 %</div>
<div class="a" style="left:359px;top:662px;width:17px;height:25px;background:#2b2b2b;border:1px solid #1f1f1f;border-radius:3px"></div>
<svg style="left:362px;top:672px;" width="10" height="6" viewBox="0 0 10 6"><path d="M0.5 0.5L5.0 5.5L9.5 0.5" fill="none" stroke="#e0e0e0" stroke-width="1.5"/></svg>
<div class="t" style="left:379px;top:669.52px;font-size:11.2px;color:#e0e0e0;">Layer (2.9 MB)</div>
<div class="a" style="left:684px;top:52px;width:3px;height:638px;background:#454545;"></div>
<div class="a" style="left:687px;top:74px;width:251px;height:209px;background:#3e3e3e;border:1px solid #5a5a5a"></div>
<div class="a" style="left:687px;top:53px;width:22px;height:22px;background:#3e3e3e;border:1px solid #5a5a5a;border-bottom:none"></div>
<div class="a" style="left:710px;top:55px;width:19px;height:19px;background:#353535;"></div>
<div class="a" style="left:729px;top:55px;width:19px;height:19px;background:#353535;"></div>
<div class="a" style="left:748px;top:55px;width:19px;height:19px;background:#353535;"></div>
<div class="a" style="left:768px;top:55px;width:19px;height:19px;background:#353535;"></div>
<div class="a" style="left:691px;top:57px;width:15px;height:14px;background:#fff;"></div>
<div class="a" style="left:692px;top:58px;width:13px;height:12px;background:#000;border-radius:4px"></div>
<div class="a" style="left:713px;top:58px;width:13px;height:14px;background:linear-gradient(90deg,#b85a10,#ffc040 30%,#ffb030 50%,#e07020 70%,#ffc040 85%,#c06010);border:1px solid #222"></div>
<div class="a" style="left:731px;top:58px;width:14px;height:14px;background:#363a3f;border:1px solid #222"><div class="a" style="left:2px;top:1px;width:10px;height:10px;border-radius:50%;background:radial-gradient(circle at 40% 30%,#eee,#888)"></div></div>
<svg style="left:751px;top:58px;" width="14" height="14" viewBox="0 0 14 14"><path d="M0 14L3 6L5 9L7 0L9 8L11 10L14 14Z" fill="#bbb"/></svg>
<svg style="left:770px;top:58px;" width="15" height="14" viewBox="0 0 15 14"><defs><pattern id="ck" width="3" height="3" patternUnits="userSpaceOnUse"><rect width="1.5" height="1.5" fill="#bbb"/><rect x="1.5" y="1.5" width="1.5" height="1.5" fill="#bbb"/></pattern></defs><path d="M2 4 C5 0 10 0 13 4 V14H2Z" fill="url(#ck)"/></svg>
<div class="a" style="left:922px;top:59px;width:12px;height:11px;background:#454545;border:1px solid #aaa"></div>
<svg style="left:925px;top:61px;" width="7" height="7" viewBox="0 0 7 7"><path d="M6 0V7L0.5 3.5Z" fill="#aaa"/></svg>
<div class="a" style="left:690.5px;top:78.7px;width:243px;height:17.5px;background:#222;"></div>
<div class="t" style="left:694px;top:82.52px;font-size:11.2px;color:#6a6a78;font-style:italic;">filter</div>
<svg style="left:917px;top:84px;" width="10" height="6" viewBox="0 0 10 6"><path d="M0.5 0.5L5.0 5.5L9.5 0.5" fill="none" stroke="#e0e0e0" stroke-width="1.5"/></svg>
<div class="t" style="left:690px;top:100.49px;font-size:11px;color:#e0e0e0;font-style:italic;">2. Hardness 100 (51 × 51)</div>
<div class="a" style="left:690px;top:114px;width:204px;height:101px;background:#fff;"></div>
<div class="a" style="left:894px;top:114px;width:25px;height:101px;background:#4a4a4a;"></div>
<div class="a" style="left:919px;top:114px;width:15px;height:101px;background:#2a2a2a;"></div>
<div class="a" style="left:920px;top:116px;width:13px;height:30px;background:#5c5c5c;border-radius:3px"></div>
<svg style="left:690px;top:114px;overflow:hidden" width="204" height="101" viewBox="0 0 204 101"><defs><filter id="bl" x="-50%" y="-100%" width="200%" height="300%"><feGaussianBlur stdDeviation="1.5"/></filter><filter id="b0" x="-100%" y="-100%" width="300%" height="300%"><feGaussianBlur stdDeviation="4"/></filter><filter id="b1" x="-100%" y="-100%" width="300%" height="300%"><feGaussianBlur stdDeviation="3.5"/></filter><filter id="b2" x="-100%" y="-100%" width="300%" height="300%"><feGaussianBlur stdDeviation="3"/></filter><filter id="spkf"><feTurbulence baseFrequency="0.6" numOctaves="1" seed="3"/><feColorMatrix values="0 0 0 0 0  0 0 0 0 0  0 0 0 0 0  0 0 0 -2.5 1.6"/></filter><filter id="spl0" x="-30%" y="-30%" width="160%" height="160%"><feTurbulence type="fractalNoise" baseFrequency="0.9" numOctaves="2" seed="1" result="n"/><feColorMatrix in="n" type="matrix" values="0 0 0 0 0  0 0 0 0 0  0 0 0 0 0  0 0 0 7 -2.6" result="m"/><feComposite in="SourceGraphic" in2="m" operator="in"/></filter><filter id="spl1" x="-30%" y="-30%" width="160%" height="160%"><feTurbulence type="fractalNoise" baseFrequency="0.9" numOctaves="2" seed="8" result="n"/><feColorMatrix in="n" type="matrix" values="0 0 0 0 0  0 0 0 0 0  0 0 0 0 0  0 0 0 7 -2.6" result="m"/><feComposite in="SourceGraphic" in2="m" operator="in"/></filter><filter id="spl2" x="-30%" y="-30%" width="160%" height="160%"><feTurbulence type="fractalNoise" baseFrequency="0.9" numOctaves="2" seed="15" result="n"/><feColorMatrix in="n" type="matrix" values="0 0 0 0 0  0 0 0 0 0  0 0 0 0 0  0 0 0 7 -2.6" result="m"/><feComposite in="SourceGraphic" in2="m" operator="in"/></filter><filter id="spl3" x="-30%" y="-30%" width="160%" height="160%"><feTurbulence type="fractalNoise" baseFrequency="0.9" numOctaves="2" seed="22" result="n"/><feColorMatrix in="n" type="matrix" values="0 0 0 0 0  0 0 0 0 0  0 0 0 0 0  0 0 0 7 -2.6" result="m"/><feComposite in="SourceGraphic" in2="m" operator="in"/></filter><filter id="spl4" x="-30%" y="-30%" width="160%" height="160%"><feTurbulence type="fractalNoise" baseFrequency="0.9" numOctaves="2" seed="29" result="n"/><feColorMatrix in="n" type="matrix" values="0 0 0 0 0  0 0 0 0 0  0 0 0 0 0  0 0 0 7 -2.6" result="m"/><feComposite in="SourceGraphic" in2="m" operator="in"/></filter><radialGradient id="spk"><stop offset="0" stop-color="#000" stop-opacity="0.85"/><stop offset="0.6" stop-color="#222" stop-opacity="0.6"/><stop offset="1" stop-color="#888" stop-opacity="0"/></radialGradient></defs><rect x="82.5" y="14" width="3" height="3" fill="#000"/><rect x="104" y="12" width="29" height="8" fill="#000"/><ellipse cx="153" cy="16" rx="12" ry="3.5" fill="#000" filter="url(#bl)"/><rect x="173" y="15.5" width="30" height="1.2" fill="#000"/><circle cx="17" cy="51" r="6" fill="#000" filter="url(#b0)"/><circle cx="17" cy="51" r="2" fill="#000" opacity="0.7" filter="url(#bl)"/><circle cx="51" cy="51" r="7" fill="#000" filter="url(#b1)"/><circle cx="51" cy="51" r="3" fill="#000" opacity="0.7" filter="url(#bl)"/><circle cx="85" cy="51" r="9" fill="#000" filter="url(#b2)"/><circle cx="85" cy="51" r="5" fill="#000" opacity="0.7" filter="url(#bl)"/><circle cx="119" cy="51" r="15.5" fill="#000"/><rect x="102.5" y="34.5" width="33" height="33" fill="none" stroke="#000" stroke-width="1"/><path d="M153 38L156.5 47L166 47L158.5 53L161.5 63L153 57L144.5 63L147.5 53L140 47L149.5 47Z" fill="#000"/><ellipse cx="187" cy="51" rx="10" ry="11" fill="url(#spk)" filter="url(#spl0)" opacity="1"/><ellipse cx="17" cy="85" rx="10" ry="8" fill="url(#spk)" filter="url(#spl1)" opacity="1"/><ellipse cx="51" cy="85" rx="8" ry="11" fill="url(#spk)" filter="url(#spl2)" opacity="0.9"/><ellipse cx="85" cy="85" rx="10" ry="10" fill="url(#spk)" filter="url(#spl3)" opacity="0.6"/><ellipse cx="119" cy="85" rx="13" ry="13" fill="url(#spk)" filter="url(#spl4)" opacity="1"/><path d="M145 73L148 80" stroke="#777" stroke-width="1.5"/><circle cx="200" cy="78" r="1.5" fill="#333"/><circle cx="210" cy="88" r="1.5" fill="#333"/><circle cx="206" cy="95" r="1.2" fill="#333"/><circle cx="220" cy="100" r="1.2" fill="#333"/><circle cx="188" cy="92" r="1" fill="#333"/><circle cx="196" cy="89" r="1" fill="#333"/><path d="M127 29H133M130 26V32" stroke="#000" stroke-width="1.6"/><rect x="131" y="30" width="2" height="2" fill="#55f"/><path d="M161 29H167M164 26V32" stroke="#000" stroke-width="1.6"/><rect x="165" y="30" width="2" height="2" fill="#55f"/><path d="M195 29H201M198 26V32" stroke="#000" stroke-width="1.6"/><rect x="199" y="30" width="2" height="2" fill="#55f"/><path d="M25 63H31M28 60V66" stroke="#000" stroke-width="1.6"/><rect x="29" y="64" width="2" height="2" fill="#55f"/><path d="M59 63H65M62 60V66" stroke="#000" stroke-width="1.6"/><rect x="63" y="64" width="2" height="2" fill="#55f"/><path d="M93 63H99M96 60V66" stroke="#000" stroke-width="1.6"/><rect x="97" y="64" width="2" height="2" fill="#55f"/><path d="M127 63H133M130 60V66" stroke="#000" stroke-width="1.6"/><rect x="131" y="64" width="2" height="2" fill="#55f"/><path d="M161 63H167M164 60V66" stroke="#000" stroke-width="1.6"/><rect x="165" y="64" width="2" height="2" fill="#55f"/><path d="M195 63H201M198 60V66" stroke="#000" stroke-width="1.6"/><rect x="199" y="64" width="2" height="2" fill="#f55"/><path d="M25 97H31M28 94V100" stroke="#000" stroke-width="1.6"/><rect x="29" y="98" width="2" height="2" fill="#f55"/><path d="M59 97H65M62 94V100" stroke="#000" stroke-width="1.6"/><rect x="63" y="98" width="2" height="2" fill="#f55"/><path d="M93 97H99M96 94V100" stroke="#000" stroke-width="1.6"/><rect x="97" y="98" width="2" height="2" fill="#f55"/><path d="M127 97H133M130 94V100" stroke="#000" stroke-width="1.6"/><rect x="131" y="98" width="2" height="2" fill="#f55"/><path d="M167 93V100H160Z" fill="#f88"/><path d="M195 97H201M198 94V100" stroke="#000" stroke-width="1.6"/><rect x="199" y="98" width="2" height="2" fill="#f55"/></svg>
<div class="a" style="left:690.5px;top:219px;width:243px;height:17px;background:#222;"></div>
<div class="t" style="left:694px;top:222.52px;font-size:11.2px;color:#e8e8e8;">Basic,</div>
<svg style="left:917px;top:224px;" width="10" height="6" viewBox="0 0 10 6"><path d="M0.5 0.5L5.0 5.5L9.5 0.5" fill="none" stroke="#e0e0e0" stroke-width="1.5"/></svg>
<div class="a" style="left:689px;top:239px;width:246px;height:16.5px;background:#2b2b2b;border:1px solid #6a6a6a"></div>
<div class="a" style="left:690px;top:240px;width:4px;height:14.5px;background:#555;"></div>
<div class="a" style="left:694px;top:240px;width:1px;height:14.5px;background:#000;"></div>
<div class="t" style="left:690px;top:242.52px;font-size:11.2px;color:#e0e0e0;">Spacing</div>
<div class="t" style="left:320px;width:600px;text-align:right;top:242.52px;font-size:11.2px;color:#e0e0e0;">10.0</div>
<svg style="left:924px;top:241px;" width="9" height="13" viewBox="0 0 9 13"><path d="M1 5L4.5 1.5L8 5M1 8L4.5 11.5L8 8" fill="none" stroke="#ddd" stroke-width="1.5"/></svg>
<svg style="left:701px;top:262px;" width="14" height="14" viewBox="0 0 14 14"><path d="M0 13H9M0 9H5M0 5H5M0 1H8" stroke="#bdbdbd" stroke-width="1.6"/><path d="M13 1L6 8L5 11L8 10L14 3Z" fill="#bdbdbd"/></svg>
<svg style="left:742px;top:262px;" width="14" height="14" viewBox="0 0 14 14"><path d="M2 3H9L13 7V14H2Z" fill="none" stroke="#bdbdbd" stroke-width="1.5"/><path d="M3 0V5M0.5 2.5H5.5" stroke="#bdbdbd" stroke-width="1.5"/></svg>
<svg style="left:783px;top:263px;" width="14" height="13" viewBox="0 0 14 13"><rect x="0.75" y="0.75" width="8" height="7" fill="none" stroke="#bdbdbd" stroke-width="1.5"/><rect x="5.25" y="5.25" width="8" height="7" fill="none" stroke="#bdbdbd" stroke-width="1.5"/></svg>
<svg style="left:824px;top:262px;" width="14" height="14" viewBox="0 0 14 14"><rect x="0" y="0" width="14" height="14" fill="url(#ck)"/><rect x="0" y="0" width="14" height="14" fill="none" stroke="#bdbdbd" stroke-width="1.5"/><path d="M2 2L12 12M12 2L2 12" stroke="#bdbdbd" stroke-width="2.5"/></svg>
<svg style="left:865px;top:262px;" width="14" height="14" viewBox="0 0 14 14"><path d="M11 4A5.5 5.5 0 1 0 12 9" fill="none" stroke="#bdbdbd" stroke-width="2"/><path d="M13 0V6H7Z" fill="#bdbdbd"/></svg>
<svg style="left:907px;top:262px;" width="14" height="14" viewBox="0 0 14 14"><path d="M1 3H8L13 5V14H1Z" fill="url(#ck)" stroke="#bdbdbd" stroke-width="1.2"/></svg>
<div class="a" style="left:687px;top:282px;width:251px;height:1px;background:#5a5a5a;"></div>
<svg style="left:803px;top:283px;" width="18" height="4" viewBox="0 0 18 4"><path d="M0 2H4M7 2H11M14 2H18" stroke="#aaa" stroke-width="2"/></svg>
<div class="a" style="left:687px;top:307px;width:251px;height:193px;background:#3e3e3e;border:1px solid #5a5a5a;border-bottom:none"></div>
<div class="a" style="left:687px;top:286px;width:65px;height:21px;background:#353535;"></div>
<div class="a" style="left:752px;top:286px;width:47px;height:21px;background:#353535;"></div>
<div class="a" style="left:799.5px;top:286px;width:54px;height:22px;background:#3e3e3e;border:1px solid #5a5a5a;border-bottom:none"></div>
<svg style="left:690px;top:289px;" width="13" height="14" viewBox="0 0 13 14"><rect x="0.75" y="0.75" width="11.5" height="12.5" fill="none" stroke="#bdbdbd" stroke-width="1.5"/><path d="M4.5 2V12M8.5 2V12" stroke="#bdbdbd" stroke-width="1.5"/></svg>
<div class="t" style="left:704px;top:292.52px;font-size:11.2px;color:#e8e8e8;">Channels</div>
<svg style="left:754px;top:290px;" width="14" height="11" viewBox="0 0 14 11"><path d="M1 3C4 1 10 1 13 3M1 1L3 3L1 5M13 1L11 3L13 5M3 9C5 5 9 5 11 9" fill="none" stroke="#bdbdbd" stroke-width="1.5"/></svg>
<div class="t" style="left:768px;top:292.52px;font-size:11.2px;color:#e8e8e8;">Paths</div>
<svg style="left:802px;top:289px;" width="15" height="14" viewBox="0 0 15 14"><path d="M2 1H14L12 4H0ZM2 5.5H14L12 8.5H0ZM2 10H14L12 13H0Z" fill="#bdbdbd"/></svg>
<div class="t" style="left:817px;top:291.52px;font-size:11.2px;color:#e8e8e8;">Layers</div>
<div class="a" style="left:922px;top:291.8px;width:12px;height:11px;background:#454545;border:1px solid #aaa"></div>
<svg style="left:925px;top:293.8px;" width="7" height="7" viewBox="0 0 7 7"><path d="M6 0V7L0.5 3.5Z" fill="#aaa"/></svg>
<div class="a" style="left:689.4px;top:310.3px;width:201.4px;height:26px;background:#2b2b2b;border:1px solid #1a1a1a;border-radius:4px"></div>
<div class="t" style="left:695px;top:318.52px;font-size:11.2px;color:#e0e0e0;">Mode</div>
<div class="t" style="left:264.5px;width:600px;text-align:right;top:318.52px;font-size:11.2px;color:#e0e0e0;">Normal</div>
<svg style="left:872px;top:320.5px;" width="10" height="6" viewBox="0 0 10 6"><path d="M0.5 0.5L5.0 5.5L9.5 0.5" fill="none" stroke="#e0e0e0" stroke-width="1.5"/></svg>
<div class="a" style="left:892.2px;top:310.3px;width:42.4px;height:26px;background:#2b2b2b;border:1px solid #1a1a1a;border-radius:4px"></div>
<svg style="left:897px;top:316px;" width="13" height="14" viewBox="0 0 13 14"><path d="M5 3A5 5 0 1 1 4 10" fill="none" stroke="#bdbdbd" stroke-width="1.6"/><path d="M2 0V6H8Z" fill="#bdbdbd" transform="rotate(-20 4 3)"/><circle cx="3" cy="11" r="2" fill="#bdbdbd"/></svg>
<svg style="left:917px;top:320.5px;" width="10" height="6" viewBox="0 0 10 6"><path d="M0.5 0.5L5.0 5.5L9.5 0.5" fill="none" stroke="#e0e0e0" stroke-width="1.5"/></svg>
<div class="a" style="left:689px;top:338px;width:246px;height:17px;background:#5a5a5a;border:1px solid #6e6e6e"></div>
<div class="a" style="left:922px;top:339px;width:12px;height:15px;background:#2b2b2b;"></div>
<div class="a" style="left:921px;top:339px;width:1px;height:15px;background:#111;"></div>
<div class="t" style="left:690px;top:342.02px;font-size:11.2px;color:#e8e8e8;">Opacity</div>
<div class="t" style="left:319px;width:600px;text-align:right;top:342.02px;font-size:11.2px;color:#e8e8e8;">100.0</div>
<svg style="left:924px;top:341px;" width="9" height="12" viewBox="0 0 9 12"><path d="M1 4.5L4.5 1L8 4.5" fill="none" stroke="#777" stroke-width="1.5"/><path d="M1 7.5L4.5 11L8 7.5" fill="none" stroke="#ddd" stroke-width="1.5"/></svg>
<div class="t" style="left:689px;top:362.22px;font-size:11.2px;color:#e0e0e0;">Lock:</div>
<svg style="left:721px;top:361px;" width="12" height="13" viewBox="0 0 12 13"><path d="M11 0L5 8" stroke="#bdbdbd" stroke-width="1.8"/><path d="M5 8C2 8 1 11 0 13C3 13 6 12 6 9Z" fill="#bdbdbd"/></svg>
<svg style="left:743px;top:361px;" width="14" height="14" viewBox="0 0 14 14"><path d="M7 0L9.5 3H8V6H11V4.5L14 7L11 9.5V8H8V11H9.5L7 14L4.5 11H6V8H3V9.5L0 7L3 4.5V6H6V3H4.5Z" fill="#bdbdbd"/></svg>
<svg style="left:768px;top:361px;" width="13" height="13" viewBox="0 0 13 13"><rect x="0" y="0" width="13" height="13" fill="#777"/><path d="M0 0h3.25v3.25h-3.25zM6.5 0h3.25v3.25h-3.25zM3.25 3.25h3.25v3.25h-3.25zM9.75 3.25h3.25v3.25h-3.25zM0 6.5h3.25v3.25h-3.25zM6.5 6.5h3.25v3.25h-3.25zM3.25 9.75h3.25v3.25h-3.25zM9.75 9.75h3.25v3.25h-3.25z" fill="#aaa"/></svg>
<div class="a" style="left:689.3px;top:380px;width:245px;height:120px;background:#2f2f2f;"></div>
<div class="a" style="left:689.3px;top:420px;width:245px;height:39px;background:#1e1e1e;"></div>
<svg style="left:694px;top:394.4px;" width="20" height="12" viewBox="0 0 20 12"><path d="M0.5 6C4 1 16 1 19.5 6C16 11 4 11 0.5 6Z" fill="none" stroke="#bdbdbd" stroke-width="1.8"/><circle cx="10" cy="5.5" r="3.5" fill="#bdbdbd"/><circle cx="9" cy="4.5" r="1" fill="#2f2f2f"/></svg>
<svg style="left:694px;top:433.3px;" width="20" height="12" viewBox="0 0 20 12"><path d="M0.5 6C4 1 16 1 19.5 6C16 11 4 11 0.5 6Z" fill="none" stroke="#bdbdbd" stroke-width="1.8"/><circle cx="10" cy="5.5" r="3.5" fill="#bdbdbd"/><circle cx="9" cy="4.5" r="1" fill="#2f2f2f"/></svg>
<div class="a" style="left:765px;top:383px;width:36px;height:35px;background:#000;"></div>
<div class="a" style="left:767px;top:385px;width:32px;height:31px;background:#363a3f;overflow:hidden"><div class="a" style="left:15px;top:0;width:17px;height:31px;background-image:linear-gradient(45deg,#888 25%,transparent 25%,transparent 75%,#888 75%),linear-gradient(45deg,#888 25%,transparent 25%,transparent 75%,#888 75%);background-color:#bbb;background-size:8px 8px;background-position:0 0,4px 4px"></div><div class="a" style="left:4px;top:6px;width:22px;height:22px;border-radius:50%;background:radial-gradient(circle at 45% 25%,#fff,#bbb 45%,#666 90%)"></div></div>
<div class="a" style="left:765px;top:422px;width:36px;height:35px;background:#363a3f;border:2px solid #fff"></div>
<div class="t" style="left:804.3px;top:395.02px;font-size:11.2px;color:#e8e8e8;">alphatest.png</div>
<div class="t" style="left:804px;top:434.52px;font-size:11.2px;color:#e8e8e8;">Layer</div>
<div class="a" style="left:938px;top:52px;width:0px;height:638px;background:#454545;"></div>
<svg style="left:684px;top:340px;" width="3" height="70" viewBox="0 0 3 70"><path d="M1.5 0V60" stroke="#999" stroke-width="1.5" stroke-dasharray="3 3"/></svg>
<div class="a" style="left:687px;top:500px;width:251px;height:190px;background:#454545;"></div>
<div class="a" style="left:689.3px;top:459px;width:245px;height:41px;background:#2f2f2f;"></div>
<div class="a" style="left:944px;top:3px;width:949px;height:683px;background:#686868;"></div>
<div class="a" style="left:944px;top:3px;width:1px;height:683px;background:#8c8c8c;"></div>
<div class="a" style="left:944px;top:3px;width:949px;height:1px;background:#8c8c8c;"></div>
<div class="a" style="left:945px;top:4px;width:948px;height:33.5px;background:#686868;"></div>
<svg style="left:945px;top:4px;clip-path:inset(0 0 0 0)" width="948" height="33.5" viewBox="0 0 948 33.5"><g fill="none" stroke="#5d5d5d" stroke-width="2.2"><path d="M456 13.5H600"/><circle cx="456" cy="13" r="2.5"/><circle cx="476" cy="36" r="15"/><path d="M470 22H482"/><circle cx="521" cy="33" r="2.5"/><path d="M521 33H600"/><path d="M833 33.5L843 24.5H948"/><path d="M890 33.5L935 -2M906 33.5L950 -2"/></g></svg>
<div class="t" style="left:968.2px;top:15.01px;font-size:11.8px;color:#cfcfcf;">AutoSave</div>
<div class="a" style="left:1025px;top:12px;width:38px;height:16px;background:transparent;border:1.5px solid #e8e8e8;border-radius:8px"></div>
<div class="a" style="left:1029px;top:15.5px;width:9px;height:9px;background:#f0f0f0;border-radius:50%"></div>
<div class="t" style="left:1043px;top:15.19px;font-size:11px;color:#f0f0f0;">Off</div>
<svg style="left:1078px;top:14px;" width="16" height="16" viewBox="0 0 16 16"><path d="M0.75 0.75H12L15.25 4V15.25H0.75Z" fill="none" stroke="#c8c8c8" stroke-width="1.3"/><rect x="4" y="0.75" width="7" height="5" fill="none" stroke="#c8c8c8" stroke-width="1.2"/><rect x="3" y="9" width="10" height="6" fill="none" stroke="#c8c8c8" stroke-width="1.2"/></svg>
<svg style="left:1107px;top:13px;" width="17" height="18" viewBox="0 0 17 18"><path d="M2 2V8H8" fill="none" stroke="#c8c8c8" stroke-width="1.3"/><path d="M2.5 7.5C6 2 15 2 15 9C15 13 12 15 9 17.5" fill="none" stroke="#c8c8c8" stroke-width="1.3"/></svg>
<svg style="left:1127px;top:20px;" width="7" height="4" viewBox="0 0 7 4"><path d="M0.5 0.5L3.5 3.5L6.5 0.5" fill="none" stroke="#c8c8c8" stroke-width="1.1"/></svg>
<svg style="left:1144px;top:14px;" width="17" height="17" viewBox="0 0 17 17"><path d="M3 4A7 7 0 1 0 14 5 M11 1L15 1L15 5" fill="none" stroke="#828282" stroke-width="1.3"/></svg>
<svg style="left:1173px;top:13px;" width="17" height="18" viewBox="0 0 17 18"><rect x="1" y="1" width="15" height="10" fill="none" stroke="#c8c8c8" stroke-width="1.3"/><path d="M6.5 3.5V8.5L10.5 6Z" fill="none" stroke="#c8c8c8" stroke-width="1.1"/><path d="M8.5 11V17M4 17H13" stroke="#c8c8c8" stroke-width="1.3"/></svg>
<svg style="left:1205px;top:16px;" width="10" height="9" viewBox="0 0 10 9"><path d="M1 1H9M1 4.5L5 8L9 4.5" fill="none" stroke="#c8c8c8" stroke-width="1.2"/></svg>
<div class="t" style="left:1057px;width:600px;text-align:center;top:15.01px;font-size:11.8px;color:#d0d0d0;">Presentation1 &nbsp;-&nbsp; PowerPoint</div>
<svg style="left:1505px;top:12px;" width="14" height="14" viewBox="0 0 14 14"><circle cx="8.5" cy="5.5" r="4.8" fill="none" stroke="#c8c8c8" stroke-width="1.3"/><path d="M5 9L0.5 13.5" stroke="#c8c8c8" stroke-width="1.4"/></svg>
<div class="a" style="left:1544px;top:4.7px;width:165px;height:33px;background:#fff;"></div>
<svg style="left:1724px;top:13px;" width="15" height="12" viewBox="0 0 15 12"><rect x="0.65" y="0.65" width="13.7" height="10.7" fill="none" stroke="#c8c8c8" stroke-width="1.3"/><path d="M0.65 3.5H14.35M7.5 10V5M5 7.5L7.5 5L10 7.5" fill="none" stroke="#c8c8c8" stroke-width="1.2"/></svg>
<div class="a" style="left:1772px;top:20px;width:11px;height:1.2px;background:#c8c8c8;"></div>
<div class="a" style="left:1817.5px;top:14.5px;width:11px;height:11px;background:transparent;border:1.2px solid #c8c8c8"></div>
<svg style="left:1863px;top:14px;" width="12" height="12" viewBox="0 0 12 12"><path d="M0.5 0.5L11.5 11.5M11.5 0.5L0.5 11.5" stroke="#c8c8c8" stroke-width="1.3"/></svg>
<div class="a" style="left:945px;top:37.5px;width:948px;height:127.5px;background:#bfbcb9;"></div>
<div class="t" style="left:962.2px;top:47.66px;font-size:12.8px;color:#2a2a2a;">File</div>
<div class="t" style="left:1013px;top:47.66px;font-size:12.8px;color:#2a2a2a;">Home</div>
<div class="t" style="left:1078px;top:47.66px;font-size:12.8px;color:#2a2a2a;">Insert</div>
<div class="t" style="left:1139.4px;top:47.66px;font-size:12.8px;color:#2a2a2a;">Design</div>
<div class="t" style="left:1208px;top:47.66px;font-size:12.8px;color:#2a2a2a;">Transitions</div>
<div class="t" style="left:1301.3px;top:47.66px;font-size:12.8px;color:#2a2a2a;">Animations</div>
<div class="t" style="left:1396px;top:47.66px;font-size:12.8px;color:#2a2a2a;">Slide Show</div>
<div class="t" style="left:1488px;top:47.66px;font-size:12.8px;color:#2a2a2a;">Review</div>
<div class="t" style="left:1555.7px;top:47.66px;font-size:12.8px;color:#2a2a2a;">View</div>
<div class="t" style="left:1611px;top:47.66px;font-size:12.8px;color:#2a2a2a;">Help</div>
<div class="t" style="left:1668px;top:47.66px;font-size:12.8px;color:#2a2a2a;">Storyboarding</div>
<div class="a" style="left:1013px;top:63px;width:38px;height:3px;background:#1f1f1f;border-radius:1px"></div>
<div class="a" style="left:1808px;top:41.7px;width:31.3px;height:22.3px;background:#f2f1f0;border:1px solid #a8a6a4;border-radius:2px"></div>
<svg style="left:1816px;top:46px;" width="15" height="13" viewBox="0 0 15 13"><path d="M0.6 4.5V12.4H12.4V8" fill="none" stroke="#2e2e2e" stroke-width="1.1"/><path d="M4 9C4 5 7 3.5 11 3.5M9 1L12 3.5L9 6" fill="none" stroke="#2e2e2e" stroke-width="1.1"/></svg>
<div class="a" style="left:1848.4px;top:41.7px;width:30.6px;height:22.3px;background:#f2f1f0;border:1px solid #a8a6a4;border-radius:2px"></div>
<svg style="left:1857px;top:47px;" width="13" height="12" viewBox="0 0 13 12"><path d="M0.6 0.6H12.4V8.4H5L2 11V8.4H0.6Z" fill="none" stroke="#2e2e2e" stroke-width="1.1"/></svg>
<div class="a" style="left:1040px;top:72px;width:1px;height:88px;background:#8f8d8b;"></div>
<div class="a" style="left:1176px;top:72px;width:1px;height:88px;background:#8f8d8b;"></div>
<div class="a" style="left:1386px;top:72px;width:1px;height:88px;background:#8f8d8b;"></div>
<div class="a" style="left:1557px;top:72px;width:1px;height:88px;background:#8f8d8b;"></div>
<div class="a" style="left:1618px;top:72px;width:1px;height:88px;background:#8f8d8b;"></div>
<div class="a" style="left:1672px;top:72px;width:1px;height:88px;background:#8f8d8b;"></div>
<div class="a" style="left:1730px;top:72px;width:1px;height:88px;background:#8f8d8b;"></div>
<div class="a" style="left:1788px;top:72px;width:1px;height:88px;background:#8f8d8b;"></div>
<div class="t" style="left:959.6px;top:150.77px;font-size:11.5px;color:#2e2e2e;">Clipboard</div>
<div class="t" style="left:807px;width:600px;text-align:center;top:150.77px;font-size:11.5px;color:#2e2e2e;">Slides</div>
<div class="t" style="left:973px;width:600px;text-align:center;top:150.77px;font-size:11.5px;color:#2e2e2e;">Font</div>
<div class="t" style="left:1163px;width:600px;text-align:center;top:150.77px;font-size:11.5px;color:#2e2e2e;">Paragraph</div>
<div class="t" style="left:1401px;width:600px;text-align:center;top:150.77px;font-size:11.5px;color:#2e2e2e;">Voice</div>
<div class="t" style="left:1459px;width:600px;text-align:center;top:150.77px;font-size:11.5px;color:#2e2e2e;">Designer</div>
<svg style="left:1028.8px;top:151.5px;" width="9" height="9" viewBox="0 0 9 9"><path d="M0.5 8V0.5H8M3 3L8 8M8 4.5V8H4.5" fill="none" stroke="#6a6866" stroke-width="1.1"/></svg>
<svg style="left:1374.5px;top:151.5px;" width="9" height="9" viewBox="0 0 9 9"><path d="M0.5 8V0.5H8M3 3L8 8M8 4.5V8H4.5" fill="none" stroke="#6a6866" stroke-width="1.1"/></svg>
<svg style="left:1546px;top:151.5px;" width="9" height="9" viewBox="0 0 9 9"><path d="M0.5 8V0.5H8M3 3L8 8M8 4.5V8H4.5" fill="none" stroke="#6a6866" stroke-width="1.1"/></svg>
<svg style="left:1873px;top:154px;" width="11" height="7" viewBox="0 0 11 7"><path d="M0.5 6L5.5 1L10.5 6" fill="none" stroke="#2e2e2e" stroke-width="1.2"/></svg>
<svg style="left:962px;top:76px;" width="30" height="31" viewBox="0 0 30 31"><rect x="1" y="4" width="20" height="23" rx="1" fill="#f4f4f2" stroke="#d08030" stroke-width="2"/><path d="M6 2.5H16V6H6Z" fill="#fff" stroke="#222" stroke-width="1"/><path d="M9 2.5A2 2 0 0 1 13 2.5" fill="none" stroke="#222" stroke-width="1"/><rect x="14.5" y="12" width="13.5" height="18" fill="#fff" stroke="#111" stroke-width="1.3"/></svg>
<div class="t" style="left:960.2px;top:112.07px;font-size:11.5px;color:#2e2e2e;">Paste</div>
<svg style="left:970.1px;top:130.3px;" width="7" height="4.5" viewBox="0 0 7 4.5"><path d="M0.5 0.5L3.5 3.5L6.5 0.5" fill="none" stroke="#2e2e2e" stroke-width="1.1"/></svg>
<svg style="left:1001px;top:75px;" width="11" height="17" viewBox="0 0 11 17"><path d="M2 0L8 10M9 0L3 10" stroke="#8e8c8a" stroke-width="1"/><circle cx="2.5" cy="13" r="2.2" fill="none" stroke="#8e8c8a"/><circle cx="8.5" cy="13" r="2.2" fill="none" stroke="#8e8c8a"/></svg>
<svg style="left:998px;top:99px;" width="17" height="16" viewBox="0 0 17 16"><path d="M0.5 0.5H6L7.5 2V13H0.5Z" fill="#dcdad8" stroke="#8e8c8a"/><path d="M7 3.5H12L15.5 7V15.5H7Z" fill="#e8e6e4" stroke="#8e8c8a"/><path d="M9 9.5H13.5M9 12H13.5" stroke="#8e8c8a"/></svg>
<svg style="left:1020.3px;top:105px;" width="7" height="4.5" viewBox="0 0 7 4.5"><path d="M0.5 0.5L3.5 3.5L6.5 0.5" fill="none" stroke="#8e8c8a" stroke-width="1.1"/></svg>
<svg style="left:999px;top:123px;" width="15" height="15" viewBox="0 0 15 15"><path d="M14 0.5L9 6" stroke="#8e8c8a" stroke-width="2"/><path d="M1 9L7 4L11 8L5 14Z" fill="#d4d2d0" stroke="#8e8c8a"/><path d="M1 9L5 14" stroke="#8e8c8a" stroke-width="2"/></svg>
<svg style="left:1054px;top:74px;" width="31" height="28" viewBox="0 0 31 28"><rect x="2.5" y="5.5" width="27" height="21" fill="#f2f2f0" stroke="#111" stroke-width="1.2"/><rect x="4.5" y="7.5" width="23" height="17" fill="none" stroke="#111" stroke-width="1"/><path d="M4.5 12H27.5M16 12V24.5" stroke="#111" stroke-width="1"/><path d="M8 0V13M1 6.5H15" stroke="#1e8a3e" stroke-width="1.8"/></svg>
<div class="t" style="left:770px;width:600px;text-align:center;top:112.07px;font-size:11.5px;color:#2e2e2e;">New</div>
<div class="t" style="left:1052px;top:127.77px;font-size:11.5px;color:#2e2e2e;">Slide</div>
<svg style="left:1081.0px;top:130.5px;" width="7" height="4.5" viewBox="0 0 7 4.5"><path d="M0.5 0.5L3.5 3.5L6.5 0.5" fill="none" stroke="#2e2e2e" stroke-width="1.1"/></svg>
<svg style="left:1097px;top:78px;" width="33" height="30" viewBox="0 0 33 30"><path d="M0.5 20V0.5H26" fill="none" stroke="#111" stroke-width="1.1"/><rect x="3.5" y="3.5" width="25" height="19" fill="#f2f2f0" stroke="#111" stroke-width="1.1"/><rect x="5.5" y="5.5" width="21" height="15" fill="none" stroke="#111" stroke-width="1"/><circle cx="17" cy="13" r="5.5" fill="#e8eef8" stroke="#3a78c8" stroke-width="1.6"/><path d="M21 17L27 23" stroke="#3a78c8" stroke-width="1.6"/></svg>
<div class="t" style="left:812px;width:600px;text-align:center;top:112.07px;font-size:11.5px;color:#2e2e2e;">Reuse</div>
<div class="t" style="left:812px;width:600px;text-align:center;top:127.77px;font-size:11.5px;color:#2e2e2e;">Slides</div>
<svg style="left:1136px;top:76px;" width="16" height="13" viewBox="0 0 16 13"><rect x="0.6" y="0.6" width="14.8" height="11.8" fill="#f2f2f0" stroke="#111" stroke-width="1.2"/><path d="M3 3.5H13M3 5V10H7V5M9 5V10H13V5" fill="none" stroke="#111" stroke-width="0.9"/></svg>
<svg style="left:1156.0px;top:81px;" width="7" height="4.5" viewBox="0 0 7 4.5"><path d="M0.5 0.5L3.5 3.5L6.5 0.5" fill="none" stroke="#2e2e2e" stroke-width="1.1"/></svg>
<svg style="left:1136px;top:99px;" width="16" height="14" viewBox="0 0 16 14"><rect x="2.6" y="4.6" width="12.8" height="8.8" fill="#f2f2f0" stroke="#111" stroke-width="1.2"/><path d="M5 7V11H13V7" fill="none" stroke="#111" stroke-width="0.9"/><path d="M1 4C3 1 7 1 8 5M0.5 1.5L1 4.5L4 4" fill="none" stroke="#3a78c8" stroke-width="1.3"/></svg>
<svg style="left:1136px;top:123px;" width="16" height="16" viewBox="0 0 16 16"><path d="M1 1H15" stroke="#1e8a3e" stroke-width="1.8"/><rect x="0.6" y="4.6" width="14.8" height="10.8" fill="#f2f2f0" stroke="#111" stroke-width="1.2"/><rect x="2.5" y="6.5" width="11" height="7" fill="none" stroke="#111" stroke-width="0.9"/></svg>
<svg style="left:1156.0px;top:129px;" width="7" height="4.5" viewBox="0 0 7 4.5"><path d="M0.5 0.5L3.5 3.5L6.5 0.5" fill="none" stroke="#2e2e2e" stroke-width="1.1"/></svg>
<div class="a" style="left:1185.2px;top:72.2px;width:193.8px;height:22.4px;background:#9c9a98;"></div>
<div class="a" style="left:1332.5px;top:72.2px;width:1.2px;height:22.4px;background:#aeacaa;"></div>
<svg style="left:1322.9px;top:82px;" width="7" height="4.5" viewBox="0 0 7 4.5"><path d="M0.5 0.5L3.5 3.5L6.5 0.5" fill="none" stroke="#7a7876" stroke-width="1.1"/></svg>
<svg style="left:1368.5px;top:82px;" width="7" height="4.5" viewBox="0 0 7 4.5"><path d="M0.5 0.5L3.5 3.5L6.5 0.5" fill="none" stroke="#7a7876" stroke-width="1.1"/></svg>
<div class="t" style="left:1336.5px;top:77.14px;font-size:12px;color:#85837f;">18</div>
<div class="t" style="left:1192.5px;top:99.40px;font-size:13px;color:#8e8c8a;font-weight:bold;">B</div>
<div class="t" style="left:1213.6px;top:99.40px;font-size:13px;color:#8e8c8a;font-style:italic;font-family:"Liberation Serif",serif;">I</div>
<div class="t" style="left:1235px;top:99.40px;font-size:13px;color:#8e8c8a;text-decoration:underline;">U</div>
<div class="t" style="left:1258px;top:99.40px;font-size:13px;color:#8e8c8a;text-shadow:1px 1px 1px #aaa;">S</div>
<div class="t" style="left:1276px;top:100.24px;font-size:12px;color:#8e8c8a;text-decoration:line-through;">ab</div>
<div class="t" style="left:1298px;top:97.84px;font-size:12px;color:#8e8c8a;">AV</div>
<svg style="left:1298px;top:109px;" width="18" height="5" viewBox="0 0 18 5"><path d="M0.5 2.5H17.5M3 0.5L0.5 2.5L3 4.5M15 0.5L17.5 2.5L15 4.5" fill="none" stroke="#aaa8a6" stroke-width="1"/></svg>
<svg style="left:1317.5px;top:105px;" width="7" height="4.5" viewBox="0 0 7 4.5"><path d="M0.5 0.5L3.5 3.5L6.5 0.5" fill="none" stroke="#8e8c8a" stroke-width="1.1"/></svg>
<svg style="left:1188px;top:122px;" width="16" height="18" viewBox="0 0 16 18"><path d="M3 11L11 2L14 5L6 14H3Z" fill="#e6e4e2" stroke="#8e8c8a" stroke-width="1.2"/><rect x="0" y="15" width="16" height="3" fill="#8e8c8a"/></svg>
<svg style="left:1209.5px;top:129px;" width="7" height="4.5" viewBox="0 0 7 4.5"><path d="M0.5 0.5L3.5 3.5L6.5 0.5" fill="none" stroke="#8e8c8a" stroke-width="1.1"/></svg>
<div class="t" style="left:1226px;top:121.30px;font-size:15px;color:#8e8c8a;">A</div>
<div class="a" style="left:1225px;top:136px;width:16px;height:3px;background:#8e8c8a;"></div>
<svg style="left:1246.5px;top:129px;" width="7" height="4.5" viewBox="0 0 7 4.5"><path d="M0.5 0.5L3.5 3.5L6.5 0.5" fill="none" stroke="#8e8c8a" stroke-width="1.1"/></svg>
<div class="t" style="left:1262px;top:124.00px;font-size:13px;color:#8e8c8a;">Aa</div>
<svg style="left:1282.5px;top:129px;" width="7" height="4.5" viewBox="0 0 7 4.5"><path d="M0.5 0.5L3.5 3.5L6.5 0.5" fill="none" stroke="#8e8c8a" stroke-width="1.1"/></svg>
<div class="a" style="left:1299.5px;top:122px;width:1px;height:20px;background:#aaa8a6;"></div>
<div class="t" style="left:1308px;top:122.30px;font-size:15px;color:#8e8c8a;">A</div>
<svg style="left:1318px;top:125px;" width="6" height="4" viewBox="0 0 6 4"><path d="M0.5 3.5L3 1L5.5 3.5" fill="none" stroke="#aaa8a6"/></svg>
<div class="t" style="left:1331px;top:124.84px;font-size:12px;color:#8e8c8a;">A</div>
<svg style="left:1340px;top:125px;" width="6" height="4" viewBox="0 0 6 4"><path d="M0.5 0.5L3 3L5.5 0.5" fill="none" stroke="#aaa8a6"/></svg>
<div class="a" style="left:1352.5px;top:122px;width:1px;height:20px;background:#aaa8a6;"></div>
<div class="t" style="left:1360px;top:121.30px;font-size:15px;color:#8e8c8a;">A</div>
<svg style="left:1367px;top:130px;" width="10" height="10" viewBox="0 0 10 10"><path d="M5 0.5L9.5 5L5 9.5L0.5 5Z" fill="#e6e4e2" stroke="#8e8c8a"/></svg>
<svg style="left:1398px;top:75px;" width="16" height="16" viewBox="0 0 16 16"><rect x="0" y="0" width="2.5" height="2.5" fill="#8e8c8a"/><rect x="0" y="6" width="2.5" height="2.5" fill="#8e8c8a"/><rect x="0" y="12" width="2.5" height="2.5" fill="#8e8c8a"/><path d="M5 1.2H14.5M5 7.2H14.5M5 13.2H14.5" stroke="#8e8c8a" stroke-width="1.3"/></svg>
<svg style="left:1419.5px;top:81px;" width="7" height="4.5" viewBox="0 0 7 4.5"><path d="M0.5 0.5L3.5 3.5L6.5 0.5" fill="none" stroke="#8e8c8a" stroke-width="1.1"/></svg>
<svg style="left:1434px;top:75px;" width="16" height="16" viewBox="0 0 16 16"><text x="0" y="4" font-size="5" fill="#8e8c8a" font-family="Liberation Sans">1</text><text x="0" y="10" font-size="5" fill="#8e8c8a" font-family="Liberation Sans">2</text><text x="0" y="16" font-size="5" fill="#8e8c8a" font-family="Liberation Sans">3</text><path d="M5 1.2H15M5 7.2H15M5 13.2H15" stroke="#8e8c8a" stroke-width="1.3"/></svg>
<svg style="left:1457.0px;top:81px;" width="7" height="4.5" viewBox="0 0 7 4.5"><path d="M0.5 0.5L3.5 3.5L6.5 0.5" fill="none" stroke="#8e8c8a" stroke-width="1.1"/></svg>
<div class="a" style="left:1473.5px;top:73px;width:1px;height:21px;background:#aaa8a6;"></div>
<svg style="left:1481px;top:75px;" width="16" height="16" viewBox="0 0 16 16"><path d="M2.5 1V15M0.5 3L2.5 1L4.5 3M0.5 13L2.5 15L4.5 13" fill="none" stroke="#aaa8a6" stroke-width="1"/><path d="M6 1.5H15.5M6 5.5H15.5M6 9.5H15.5M6 13.5H15.5" stroke="#8e8c8a" stroke-width="1.3"/></svg>
<svg style="left:1501.0px;top:81px;" width="7" height="4.5" viewBox="0 0 7 4.5"><path d="M0.5 0.5L3.5 3.5L6.5 0.5" fill="none" stroke="#8e8c8a" stroke-width="1.1"/></svg>
<svg style="left:1519px;top:75px;" width="14" height="17" viewBox="0 0 14 17"><path d="M2.5 0V15M0 12.5L2.5 15.5L5 12.5M10 6V15.5M7.5 12.5L10 15.5L12.5 12.5" fill="none" stroke="#8e8c8a" stroke-width="1.3"/><text x="7" y="7" font-size="8" fill="#aaa8a6" font-family="Liberation Sans">A</text></svg>
<svg style="left:1537.0px;top:81px;" width="7" height="4.5" viewBox="0 0 7 4.5"><path d="M0.5 0.5L3.5 3.5L6.5 0.5" fill="none" stroke="#8e8c8a" stroke-width="1.1"/></svg>
<svg style="left:1399px;top:99px;" width="15" height="14" viewBox="0 0 15 14"><path d="M0 1H14M6 5H14M6 9H14M0 13H14" stroke="#8e8c8a" stroke-width="1.3"/><path d="M4.5 7H0.5M2.5 5L0.5 7L2.5 9" fill="none" stroke="#aaa8a6" stroke-width="1"/></svg>
<svg style="left:1421px;top:99px;" width="15" height="14" viewBox="0 0 15 14"><path d="M0 1H14M6 5H14M6 9H14M0 13H14" stroke="#8e8c8a" stroke-width="1.3"/><path d="M0.5 7H4.5M2.5 5L4.5 7L2.5 9" fill="none" stroke="#aaa8a6" stroke-width="1"/></svg>
<div class="a" style="left:1443.5px;top:97px;width:1px;height:21px;background:#aaa8a6;"></div>
<svg style="left:1453px;top:102px;" width="13" height="9" viewBox="0 0 13 9"><path d="M0 1H5M0 4.5H5M0 8H5M8 1H13M8 4.5H13M8 8H13" stroke="#aaa8a6" stroke-width="1.2"/></svg>
<svg style="left:1471.0px;top:105px;" width="7" height="4.5" viewBox="0 0 7 4.5"><path d="M0.5 0.5L3.5 3.5L6.5 0.5" fill="none" stroke="#8e8c8a" stroke-width="1.1"/></svg>
<svg style="left:1517px;top:99px;" width="17" height="16" viewBox="0 0 17 16"><rect x="0.6" y="2.6" width="15.8" height="10.8" fill="#dcdad8" stroke="#8e8c8a" stroke-width="1.2"/><path d="M8.5 0V16M6.5 2L8.5 0L10.5 2M6.5 14L8.5 16L10.5 14M5 8H12" fill="none" stroke="#aaa8a6" stroke-width="1"/></svg>
<svg style="left:1537.0px;top:105px;" width="7" height="4.5" viewBox="0 0 7 4.5"><path d="M0.5 0.5L3.5 3.5L6.5 0.5" fill="none" stroke="#8e8c8a" stroke-width="1.1"/></svg>
<svg style="left:1399px;top:124px;" width="15" height="14" viewBox="0 0 15 14"><path d="M0 1H14M0 5H9M0 9H14M0 13H9" stroke="#8e8c8a" stroke-width="1.3"/></svg>
<svg style="left:1421px;top:124px;" width="15" height="14" viewBox="0 0 15 14"><path d="M0 1H14M2.5 5H11.5M0 9H14M2.5 13H11.5" stroke="#8e8c8a" stroke-width="1.3"/></svg>
<svg style="left:1443px;top:124px;" width="15" height="14" viewBox="0 0 15 14"><path d="M0 1H14M5 5H14M0 9H14M5 13H14" stroke="#8e8c8a" stroke-width="1.3"/></svg>
<svg style="left:1465px;top:124px;" width="15" height="14" viewBox="0 0 15 14"><path d="M0 1H14M0 5H14M0 9H14M0 13H14" stroke="#8e8c8a" stroke-width="1.3"/></svg>
<svg style="left:1486px;top:123px;" width="17" height="17" viewBox="0 0 17 17"><path d="M0.5 0V17M16.5 0V17" stroke="#aaa8a6" stroke-width="1"/><path d="M3 2.5H14M5 0.5L3 2.5L5 4.5M12 0.5L14 2.5L12 4.5" fill="none" stroke="#aaa8a6" stroke-width="1"/><path d="M3 7H14M3 10.5H14M3 14H14" stroke="#8e8c8a" stroke-width="1.3"/></svg>
<svg style="left:1517px;top:124px;" width="17" height="15" viewBox="0 0 17 15"><path d="M0 0.5H9L11 4H5L7 7H0Z" fill="#aaa8a6"/><rect x="7" y="6.6" width="9.4" height="7.8" fill="#e6e4e2" stroke="#8e8c8a" stroke-width="1.2"/><path d="M9 9H10M11.5 9H15M9 12H10M11.5 12H15" stroke="#8e8c8a" stroke-width="1"/></svg>
<svg style="left:1537.0px;top:129px;" width="7" height="4.5" viewBox="0 0 7 4.5"><path d="M0.5 0.5L3.5 3.5L6.5 0.5" fill="none" stroke="#8e8c8a" stroke-width="1.1"/></svg>
<div class="a" style="left:1572px;top:72.2px;width:32px;height:30.3px;background:#d6d4d2;border:1px solid #a09e9c"></div>
<svg style="left:1580px;top:79px;" width="17" height="17" viewBox="0 0 17 17"><rect x="0.75" y="0.75" width="10" height="10" fill="#fff" stroke="#111" stroke-width="1.3"/><path d="M6 16L10.5 4L15 16M7.5 12H13.5" fill="none" stroke="#3b7bd0" stroke-width="1.5"/></svg>
<div class="t" style="left:1287.5px;width:600px;text-align:center;top:110.27px;font-size:11.5px;color:#2e2e2e;">Drawing</div>
<svg style="left:1584.0px;top:128.5px;" width="7" height="4.5" viewBox="0 0 7 4.5"><path d="M0.5 0.5L3.5 3.5L6.5 0.5" fill="none" stroke="#2e2e2e" stroke-width="1.1"/></svg>
<div class="a" style="left:1630px;top:72.2px;width:32px;height:30.3px;background:#d6d4d2;border:1px solid #a09e9c"></div>
<svg style="left:1638px;top:79px;" width="16" height="16" viewBox="0 0 16 16"><circle cx="9.5" cy="6" r="5" fill="none" stroke="#111" stroke-width="1.3"/><path d="M6 9.5L0.8 15" stroke="#111" stroke-width="1.4"/></svg>
<div class="t" style="left:1345.5px;width:600px;text-align:center;top:110.27px;font-size:11.5px;color:#2e2e2e;">Editing</div>
<svg style="left:1642.0px;top:128.5px;" width="7" height="4.5" viewBox="0 0 7 4.5"><path d="M0.5 0.5L3.5 3.5L6.5 0.5" fill="none" stroke="#2e2e2e" stroke-width="1.1"/></svg>
<svg style="left:1690px;top:76px;" width="22" height="28" viewBox="0 0 22 28"><rect x="5.5" y="0.5" width="11" height="19" rx="5.5" fill="#5a9ee0" stroke="#2a5a90" stroke-width="1"/><path d="M1 12C1 24 21 24 21 12" fill="none" stroke="#111" stroke-width="1.3"/><path d="M11 22V27M6 27H16" stroke="#111" stroke-width="1.3"/></svg>
<div class="t" style="left:1401px;width:600px;text-align:center;top:112.27px;font-size:11.5px;color:#2e2e2e;">Dictate</div>
<svg style="left:1697.5px;top:130px;" width="7" height="4.5" viewBox="0 0 7 4.5"><path d="M0.5 0.5L3.5 3.5L6.5 0.5" fill="none" stroke="#2e2e2e" stroke-width="1.1"/></svg>
<svg style="left:1744px;top:74px;" width="31" height="29" viewBox="0 0 31 29"><rect x="4.5" y="7.5" width="25" height="20" fill="#f4f4f2" stroke="#111" stroke-width="1.3"/><rect x="6.5" y="9.5" width="21" height="16" fill="none" stroke="#111" stroke-width="0.9"/><path d="M21 9.5V25.5M6.5 14H27.5" stroke="#111" stroke-width="0.9"/><path d="M8 0L1 13H6L3 22L12 7H7L11 0Z" fill="#e8901e" stroke="#b86010" stroke-width="0.6"/></svg>
<div class="t" style="left:1459px;width:600px;text-align:center;top:112.27px;font-size:11.5px;color:#2e2e2e;">Design</div>
<div class="t" style="left:1459px;width:600px;text-align:center;top:128.27px;font-size:11.5px;color:#2e2e2e;">Ideas</div>
<div class="a" style="left:945px;top:165px;width:948px;height:498px;background:#686868;"></div>
<div class="a" style="left:945px;top:165px;width:948px;height:7px;background:linear-gradient(#4a4a4a,#686868);"></div>
<div class="a" style="left:1136px;top:167px;width:1px;height:496px;background:#8e8e8e;"></div>
<div class="t" style="left:957.9px;top:183.94px;font-size:12px;color:#dddddd;">1</div>
<div class="a" style="left:976.8px;top:180.8px;width:139.4px;height:82.3px;background:#363a3f;border:3px solid #ef927f"></div>
<div class="a" style="left:1032.30px;top:208.60px;width:28.90px;height:28.90px;border-radius:50%;overflow:hidden;-webkit-mask-image:linear-gradient(#000 15.57px, rgba(0,0,0,0) 15.57px), radial-gradient(ellipse 18.51px 10.28px at 13.68px 15.57px, #000 86%, rgba(0,0,0,0.3) 100%, rgba(0,0,0,0) 106%);mask-image:linear-gradient(#000 15.57px, rgba(0,0,0,0) 15.57px), radial-gradient(ellipse 18.51px 10.28px at 13.68px 15.57px, #000 86%, rgba(0,0,0,0.3) 100%, rgba(0,0,0,0) 106%)"><div class="a" style="left:0;top:0;width:28.90px;height:28.90px;background:linear-gradient(100deg, rgba(0,0,0,0) 45%, rgba(0,0,0,0.13) 100%), radial-gradient(circle at 13.88px 1.79px, #fbfbfb 0px, #e3e3e3 5.14px, #c4c4c4 12.34px, #a0a0a1 16.97px, #838487 20.06px, #68696d 23.14px, #54565a 26.23px, #44474b 29.83px)"></div><div class="a" style="left:14.21px;top:0;width:14.69px;height:28.90px;background:radial-gradient(circle at -0.33px 1.79px, #f6f6f6 0px, #e0e1e2 4.11px, #c8c9cb 8.23px, #a0a1a4 12.86px, #7a7c80 16.97px, #5a5d62 20.57px, #45484d 24.68px, #3a3d42 28.80px)"></div></div>
<div class="a" style="left:1153px;top:212px;width:709px;height:400px;background:#363a3f;border:1px solid #8e8e8e"></div>
<div class="a" style="left:1431.40px;top:339.00px;width:154.80px;height:154.80px;border-radius:50%;overflow:hidden;-webkit-mask-image:linear-gradient(#000 83.40px, rgba(0,0,0,0) 83.40px), radial-gradient(ellipse 99.16px 55.09px at 73.27px 83.40px, #000 86%, rgba(0,0,0,0.3) 100%, rgba(0,0,0,0) 106%);mask-image:linear-gradient(#000 83.40px, rgba(0,0,0,0) 83.40px), radial-gradient(ellipse 99.16px 55.09px at 73.27px 83.40px, #000 86%, rgba(0,0,0,0.3) 100%, rgba(0,0,0,0) 106%)"><div class="a" style="left:0;top:0;width:154.80px;height:154.80px;background:linear-gradient(100deg, rgba(0,0,0,0) 45%, rgba(0,0,0,0.13) 100%), radial-gradient(circle at 74.37px 9.59px, #fbfbfb 0px, #e3e3e3 27.54px, #c4c4c4 66.11px, #a0a0a1 90.90px, #838487 107.42px, #68696d 123.95px, #54565a 140.48px, #44474b 159.76px)"></div><div class="a" style="left:75.75px;top:0;width:79.05px;height:154.80px;background:radial-gradient(circle at -1.38px 9.59px, #f6f6f6 0px, #e0e1e2 22.04px, #c8c9cb 44.07px, #a0a1a4 68.86px, #7a7c80 90.90px, #5a5d62 110.18px, #45484d 132.21px, #3a3d42 154.25px)"></div></div>
<div class="a" style="left:1506px;top:307px;width:1px;height:30px;background:#393d43;"></div>
<div class="a" style="left:1506px;top:483px;width:1px;height:34px;background:#393d43;"></div>
<div class="a" style="left:945px;top:661px;width:948px;height:2px;background:#8e8e8e;"></div>
<div class="a" style="left:945px;top:663px;width:948px;height:2px;background:#4a4a4a;"></div>
<div class="a" style="left:945px;top:665px;width:948px;height:21px;background:#bfbcb9;"></div>
<svg style="left:1455px;top:666px;" width="22" height="19" viewBox="0 0 22 19"><path d="M5 4L8 1L11 4" fill="none" stroke="#2e2e2e" stroke-width="1"/><path d="M0 8.5H17M0 12.5H17M0 16.5H17" stroke="#2e2e2e" stroke-width="1"/></svg>
<div class="t" style="left:1474.3px;top:669.07px;font-size:11.5px;color:#2e2e2e;">Notes</div>
<div class="a" style="left:1523.3px;top:665px;width:39.3px;height:21px;background:#a3a19f;"></div>
<svg style="left:1536px;top:668px;" width="14" height="13" viewBox="0 0 14 13"><rect x="0.5" y="0.5" width="13" height="12" fill="none" stroke="#2e2e2e" stroke-width="1"/><path d="M3 3V10H13M5.5 3H11V7.5H5.5Z" fill="none" stroke="#2e2e2e" stroke-width="1"/></svg>
<svg style="left:1576px;top:668px;" width="14" height="13" viewBox="0 0 14 13"><rect x="0.5" y="0.5" width="5" height="5" fill="none" stroke="#2e2e2e"/><rect x="8.5" y="0.5" width="5" height="5" fill="none" stroke="#2e2e2e"/><rect x="0.5" y="7.5" width="5" height="5" fill="none" stroke="#2e2e2e"/><rect x="8.5" y="7.5" width="5" height="5" fill="none" stroke="#2e2e2e"/></svg>
<svg style="left:1616px;top:667px;" width="14" height="14" viewBox="0 0 14 14"><path d="M0.5 1.5H6L7 2.5L8 1.5H13.5V12.5H8L7 13.5L6 12.5H0.5Z M7 2.5V13" fill="none" stroke="#2e2e2e" stroke-width="1"/><path d="M2 4.5H5M2 7H5M2 9.5H5M9 4.5H12M9 7H12M9 9.5H12" stroke="#2e2e2e" stroke-width="0.8"/></svg>
<svg style="left:1655px;top:667px;" width="14" height="14" viewBox="0 0 14 14"><rect x="0.5" y="0.5" width="13" height="8" fill="none" stroke="#2e2e2e"/><path d="M7 8.5V13M4 13.5H10" stroke="#2e2e2e"/></svg>
<div class="a" style="left:1687px;top:674px;width:9px;height:1.2px;background:#2e2e2e;"></div>
<div class="a" style="left:1701.8px;top:674px;width:99.6px;height:1px;background:#8a8886;"></div>
<div class="a" style="left:1750px;top:671px;width:1px;height:6px;background:#8a8886;"></div>
<div class="a" style="left:1727px;top:668.5px;width:5.5px;height:11px;background:#6a6866;"></div>
<svg style="left:1805px;top:669px;" width="11" height="11" viewBox="0 0 11 11"><path d="M0 5.5H11M5.5 0V11" stroke="#2e2e2e" stroke-width="1.2"/></svg>
<div class="t" style="left:1828px;top:669.69px;font-size:11px;color:#2e2e2e;">56%</div>
<svg style="left:1861px;top:667px;" width="15" height="15" viewBox="0 0 15 15"><rect x="4.5" y="4.5" width="6" height="6" fill="none" stroke="#2e2e2e"/><path d="M7.5 0.5V3M5.5 2.5L7.5 0.5L9.5 2.5M7.5 14.5V12M5.5 12.5L7.5 14.5L9.5 12.5M0.5 7.5H3M2.5 5.5L0.5 7.5L2.5 9.5M14.5 7.5H12M12.5 5.5L14.5 7.5L12.5 9.5" fill="none" stroke="#2e2e2e"/></svg>
<div class="a" style="left:945px;top:686px;width:948px;height:305px;background:#fff;"></div>
<div class="a" style="left:1337px;top:500px;width:14px;height:186px;background:linear-gradient(90deg,rgba(0,0,0,0.22),rgba(0,0,0,0));"></div>
<div class="a" style="left:1892px;top:37px;width:1px;height:649px;background:#8a8a8a;"></div>
<div class="a" style="left:675px;top:500px;width:662px;height:491px;background:#363a3f;"></div>
<div class="a" style="left:675px;top:500px;width:662px;height:1px;background:#545878;"></div>
<div class="a" style="left:675px;top:500px;width:1px;height:192px;background:#545878;"></div>
<div class="a" style="left:675px;top:692px;width:2px;height:299px;background:#fff;"></div>
<div class="a" style="left:1336px;top:500px;width:1px;height:491px;background:#545878;"></div>
<div class="a" style="left:676px;top:501px;width:660px;height:42px;background:#000;"></div>
<div class="a" style="left:684px;top:509px;width:240px;height:35px;background:#2b2b2b;border-radius:8px 8px 0 0"></div>
<div class="a" style="left:676px;top:536px;width:8px;height:8px;background:radial-gradient(circle at 0 0,#000 7.5px,#2b2b2b 8px)"></div>
<div class="a" style="left:924px;top:536px;width:8px;height:8px;background:radial-gradient(circle at 100% 0,#000 7.5px,#2b2b2b 8px)"></div>
<div class="a" style="left:676px;top:543px;width:660px;height:35px;background:#2b2b2b;"></div>
<div class="a" style="left:676px;top:578px;width:660px;height:1px;background:#1c1c1c;"></div>
<svg style="left:697px;top:519px;" width="14" height="14" viewBox="0 0 14 14"><circle cx="7" cy="7" r="6.5" fill="#5f6368"/><path d="M3 3C5 4 6 6 5 8C4 9 3 9 2.5 10.5M8 1C7.5 3 9 4 10.5 4M13 8C11 8 9 9 9.5 11C10 12.5 8 13 7 13.5" fill="none" stroke="#2b2b2b" stroke-width="1.6"/></svg>
<div class="t" style="left:720.2px;top:519.54px;font-size:12px;color:#ffffff;">alphatest.png (386×379)</div>
<svg style="left:903px;top:521px;" width="10" height="10" viewBox="0 0 10 10"><path d="M1 1L9 9M9 1L1 9" stroke="#e8eaed" stroke-width="1.6"/></svg>
<svg style="left:939px;top:519px;" width="14" height="14" viewBox="0 0 14 14"><path d="M7 0.5V13.5M0.5 7H13.5" stroke="#fff" stroke-width="2"/></svg>
<div class="a" style="left:1215px;top:515px;width:11px;height:1px;background:#fff;"></div>
<div class="a" style="left:1262px;top:510px;width:10px;height:10px;background:transparent;border:1px solid #fff"></div>
<svg style="left:1308px;top:510px;" width="11" height="11" viewBox="0 0 11 11"><path d="M0.5 0.5L10.5 10.5M10.5 0.5L0.5 10.5" stroke="#fff" stroke-width="1.1"/></svg>
<svg style="left:690px;top:554px;" width="16" height="14" viewBox="0 0 16 14"><path d="M15 7H2M7.5 1.5L2 7L7.5 12.5" fill="none" stroke="#8a8a8a" stroke-width="1.8"/></svg>
<svg style="left:722px;top:554px;" width="16" height="14" viewBox="0 0 16 14"><path d="M1 7H14M8.5 1.5L14 7L8.5 12.5" fill="none" stroke="#8a8a8a" stroke-width="1.8"/></svg>
<svg style="left:754px;top:553px;" width="16" height="16" viewBox="0 0 16 16"><path d="M13.5 6A6 6 0 1 0 13.6 10" fill="none" stroke="#e8eaed" stroke-width="1.8"/><path d="M15 1.5V7H9.5Z" fill="#e8eaed"/></svg>
<svg style="left:786px;top:552px;" width="17" height="17" viewBox="0 0 17 17"><path d="M1.5 8.5L8.5 1.5L15.5 8.5M3.5 7V15.5H13.5V7" fill="none" stroke="#e8eaed" stroke-width="1.8"/></svg>
<div class="a" style="left:816.3px;top:547.3px;width:500px;height:27.7px;background:#3a3a3a;border-radius:14px"></div>
<svg style="left:826px;top:554px;" width="15" height="15" viewBox="0 0 15 15"><circle cx="7.5" cy="7.5" r="6.6" fill="none" stroke="#e8eaed" stroke-width="1.5"/><path d="M7.5 6V11.5" stroke="#e8eaed" stroke-width="1.8"/><circle cx="7.5" cy="4" r="1" fill="#e8eaed"/></svg>
<div class="t" style="left:850.6px;top:555.42px;font-size:12.5px;color:#e8eaed;">File</div>
<div class="a" style="left:878px;top:553px;width:1px;height:16px;background:#777;"></div>
<div class="t" style="left:888.2px;top:555.42px;font-size:12.5px;color:#e8eaed;">C:/Users/</div>
<div class="a" style="left:940px;top:545px;width:359px;height:32px;background:#fff;"></div>
<svg style="left:1313px;top:555px;" width="4" height="14" viewBox="0 0 4 14"><circle cx="2" cy="2" r="1.6" fill="#e8eaed"/><circle cx="2" cy="7" r="1.6" fill="#e8eaed"/><circle cx="2" cy="12" r="1.6" fill="#e8eaed"/></svg>
<div class="a" style="left:867.50px;top:654.60px;width:281.20px;height:281.20px;border-radius:50%;overflow:hidden;-webkit-mask-image:linear-gradient(#000 151.51px, rgba(0,0,0,0) 151.51px), radial-gradient(ellipse 180.13px 100.07px at 133.09px 151.51px, #000 86%, rgba(0,0,0,0.3) 100%, rgba(0,0,0,0) 106%);mask-image:linear-gradient(#000 151.51px, rgba(0,0,0,0) 151.51px), radial-gradient(ellipse 180.13px 100.07px at 133.09px 151.51px, #000 86%, rgba(0,0,0,0.3) 100%, rgba(0,0,0,0) 106%)"><div class="a" style="left:0;top:0;width:281.20px;height:281.20px;background:linear-gradient(100deg, rgba(0,0,0,0) 45%, rgba(0,0,0,0.13) 100%), radial-gradient(circle at 135.10px 17.41px, #fbfbfb 0px, #e3e3e3 50.04px, #c4c4c4 120.09px, #a0a0a1 165.12px, #838487 195.14px, #68696d 225.16px, #54565a 255.18px, #44474b 290.21px)"></div><div class="a" style="left:138.30px;top:0;width:142.90px;height:281.20px;background:radial-gradient(circle at -3.20px 17.41px, #f6f6f6 0px, #e0e1e2 40.03px, #c8c9cb 80.06px, #a0a1a4 125.09px, #7a7c80 165.12px, #5a5d62 200.14px, #45484d 240.17px, #3a3d42 280.20px)"></div></div></body></html>
